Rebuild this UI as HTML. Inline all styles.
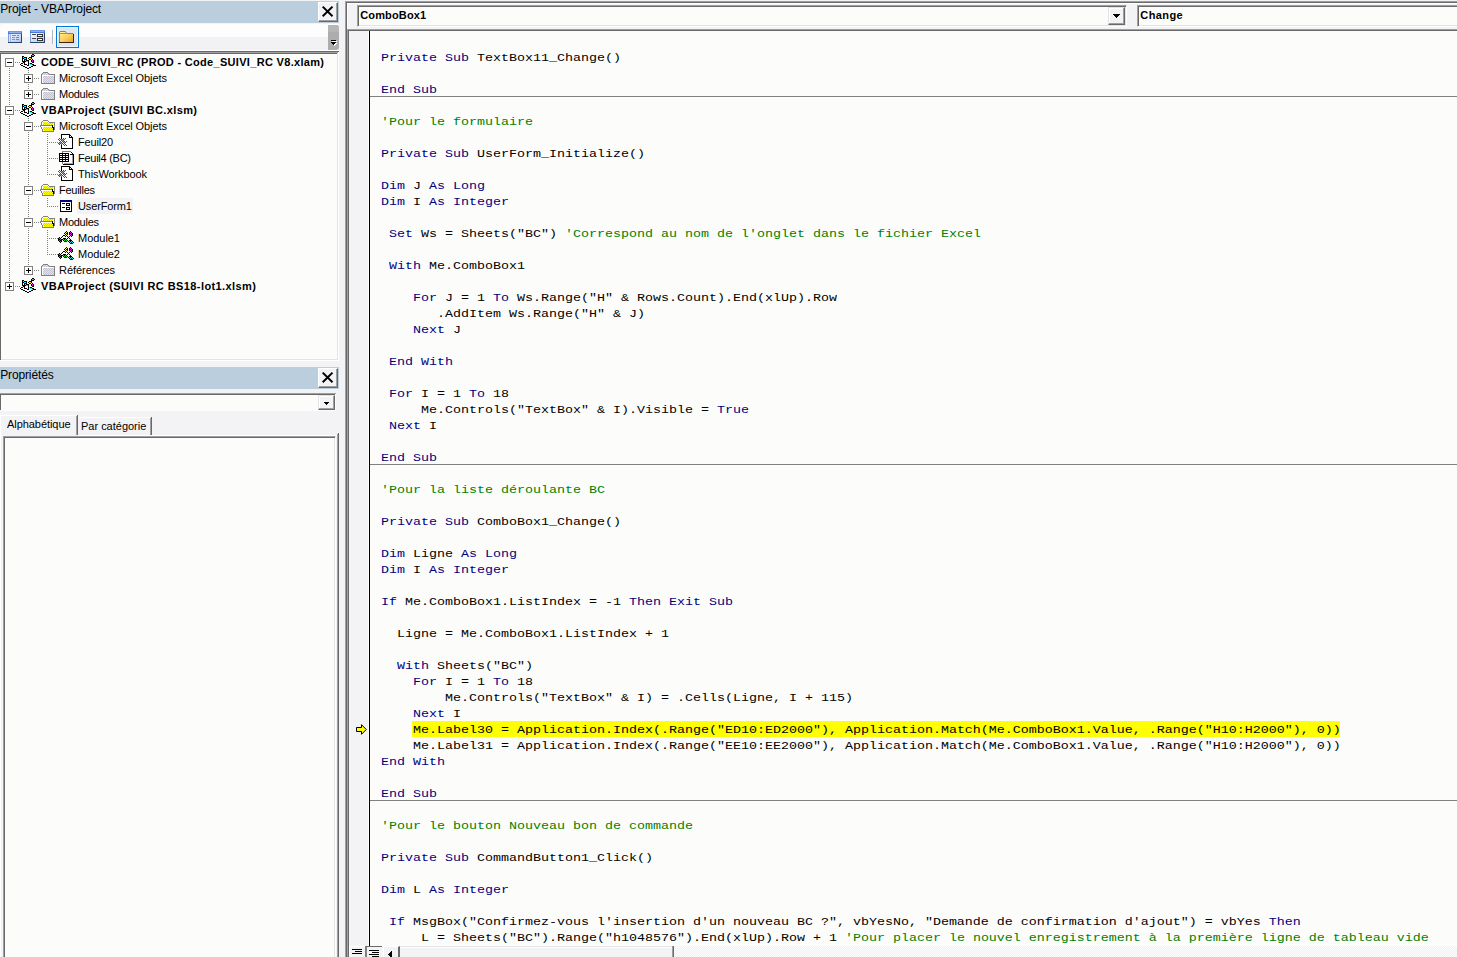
<!DOCTYPE html>
<html><head><meta charset="utf-8"><title>VBA</title>
<style>
*{box-sizing:border-box;margin:0;padding:0}
html,body{width:1457px;height:957px;overflow:hidden;background:#f3f2f5;font-family:"Liberation Sans",sans-serif;}
.abs{position:absolute}
#root{position:absolute;left:0;top:0;width:1457px;height:957px;overflow:hidden;background:#f3f2f5}
.tbar{position:absolute;left:0;width:339px;height:22px;background:#bbcedd;font-size:12px;color:#000;white-space:nowrap}
.tbar span{position:absolute;left:0.2px;top:1px;line-height:14px}
.tbar span span{position:static}
.xbtn{position:absolute;left:318px;width:20px;height:20px;background:#f3f2f5;border-top:1px solid #fff;border-left:1px solid #fff;border-right:1px solid #696969;border-bottom:1px solid #696969;box-shadow:inset -1px -1px 0 #a0a0a0}
.xbtn svg{position:absolute;left:2px;top:2px}
#tree{position:absolute;left:0;top:51px;width:339px;height:310px;background:#fcfdfb;overflow:hidden}
.trow{position:absolute;height:16px;font-size:11px;line-height:16px;white-space:nowrap;color:#000}
.b{font-weight:bold}
.fit{display:inline-block;white-space:nowrap}
#code{position:absolute;left:370px;top:31px;width:1087px;height:915px;background:#fcfdfb;overflow:hidden}
.ln{position:absolute;height:16px;transform:scaleY(0.87);transform-origin:0 0;font-family:"Liberation Mono",monospace;font-size:13.333px;line-height:16px;white-space:pre;color:#000}
.k{color:#000080}.c{color:#008000}
.sep{position:absolute;left:0;width:1087px;height:1px;background:#808080}
.l{position:absolute}
.cbtn{position:absolute;background:#f3f2f5;border-top:1px solid #e3e3e3;border-left:1px solid #e3e3e3;border-right:1px solid #696969;border-bottom:1px solid #696969;box-shadow:inset -1px -1px 0 #a0a0a0,inset 1px 1px 0 #fff}
.cmb{position:absolute;background:#fcfdfb;border-top:1px solid #a0a0a0;border-left:1px solid #a0a0a0;border-right:1px solid #fff;border-bottom:1px solid #fff;box-shadow:inset 1px 1px 0 #696969,inset -1px -1px 0 #e3e3e3;font-size:11px;font-weight:bold;white-space:nowrap}
</style></head><body><div id="root">

<!-- ===== PROJECT PANEL ===== -->
<div class="tbar" style="top:1px"><span id="t1"><span class="fit" style="letter-spacing:-0.132px">Projet - VBAProject</span></span></div>
<div class="xbtn" style="top:2px"><svg width="16" height="16" viewBox="0 0 16 16"><path d="M1.7 1.6 L11.5 11.3 M11.5 1.6 L1.7 11.3" stroke="#000" stroke-width="2" fill="none"/></svg></div>
<!-- toolbar -->
<div class="abs" style="left:0;top:24px;width:339px;height:13px;background:#fdfdfd;border-top-left-radius:3px"></div>
<div class="abs" style="left:0;top:37px;width:339px;height:13px;background:#f2f1f4"></div>
<div class="abs" style="left:0;top:50px;width:339px;height:1px;background:#fff"></div>

<!-- view code icon 8..21 x 31..42 -->
<svg class="abs" style="left:8px;top:31px" width="14" height="12" shape-rendering="crispEdges">
<defs><linearGradient id="gb1" x1="0" y1="0" x2="1" y2="1"><stop offset="0" stop-color="#fff"/><stop offset="1" stop-color="#a9c4f0"/></linearGradient></defs>
<rect x="0" y="0" width="14" height="12" fill="#4a78dc"/>
<rect x="0" y="0" width="14" height="1" fill="#6f96ea"/>
<rect x="1" y="1" width="12" height="1" fill="#8fb0f0"/>
<rect x="0" y="3" width="13" height="8" fill="url(#gb1)"/>
<rect x="0" y="3" width="1" height="8" fill="#7fa0e0"/><rect x="1" y="3" width="1" height="8" fill="#e8e4c0"/><rect x="2" y="3" width="1" height="8" fill="#9fb6e6"/>
<rect x="13" y="3" width="1" height="9" fill="#2a4470"/><rect x="0" y="11" width="14" height="1" fill="#2a4470"/>
<rect x="4" y="4" width="4" height="1" fill="#ff5a2a"/><rect x="9" y="4" width="2" height="1" fill="#ff5a2a"/>
<rect x="4" y="6" width="3" height="1" fill="#7f92b8"/><rect x="8" y="6" width="3" height="1" fill="#6f84ae"/>
<rect x="4" y="8" width="3" height="1" fill="#7f92b8"/><rect x="8" y="8" width="3" height="1" fill="#ff5a2a"/>
</svg>
<!-- view object icon 30..44 x 30..42 -->
<svg class="abs" style="left:30px;top:30px" width="15" height="13" shape-rendering="crispEdges">
<defs><linearGradient id="gb2" x1="0" y1="0" x2="1" y2="1"><stop offset="0" stop-color="#fff"/><stop offset="1" stop-color="#a9c4f0"/></linearGradient></defs>
<rect x="0" y="0" width="15" height="13" fill="#4a78dc"/>
<rect x="0" y="0" width="15" height="1" fill="#6f96ea"/>
<rect x="1" y="1" width="13" height="1" fill="#8fb0f0"/>
<rect x="0" y="3" width="14" height="9" fill="url(#gb2)"/>
<rect x="0" y="3" width="1" height="9" fill="#7fa0e0"/>
<rect x="14" y="3" width="1" height="10" fill="#2a4470"/><rect x="0" y="12" width="15" height="1" fill="#2a4470"/>
<rect x="2" y="4" width="4" height="1" fill="#444"/><rect x="2" y="8" width="4" height="1" fill="#444"/>
<rect x="7" y="4" width="6" height="3" fill="#333"/><rect x="8" y="5" width="4" height="1" fill="#fff"/>
<rect x="7" y="8" width="6" height="3" fill="#333"/><rect x="8" y="9" width="4" height="1" fill="#fff"/>
</svg>
<!-- separator -->
<div class="l" style="left:52px;top:30px;width:1px;height:14px;background:#b4b4b4"></div>
<div class="l" style="left:53px;top:30px;width:1px;height:14px;background:#fff"></div>
<!-- toggle folders button 56..78 x 26..47 -->
<div class="abs" style="left:56px;top:26px;width:23px;height:22px;background:#dbe8f4;border:1px solid #0078d7;box-shadow:inset 0 0 0 1px #f0f6fc"></div>
<svg class="abs" style="left:59px;top:31px" width="15" height="12">
<defs><linearGradient id="gf" x1="0" y1="0" x2="1" y2="1"><stop offset="0" stop-color="#fff0a0"/><stop offset="0.5" stop-color="#fcd060"/><stop offset="1" stop-color="#eaa020"/></linearGradient></defs>
<path d="M0.5 11.5 V1 L1 0.5 H6.5 L7.5 2.5 H14 L14.5 3 V11.5 Z" fill="url(#gf)" stroke="#8a8070" stroke-width="1"/>
<rect x="1" y="1" width="5" height="1" fill="#fff0a0"/>
<rect x="1" y="2" width="6" height="1" fill="#9a9080"/>
<path d="M0 11.5 H15 M14.5 3 V12" stroke="#3a2418" stroke-width="1" fill="none"/>
</svg>

<!-- overflow -->
<div class="abs" style="left:328px;top:25px;width:11px;height:25px;background:#adadad;border-radius:0 3px 3px 0"></div>
<div class="abs" style="left:328px;top:25px;width:11px;height:7px;background:#b6b6b6;border-radius:0 3px 0 0"></div>
<svg class="abs" style="left:330px;top:39px" width="8" height="8" shape-rendering="crispEdges"><g fill="#fff" transform="translate(1,1)"><rect x="1" y="1" width="5" height="1"/><rect x="1" y="3" width="5" height="1"/><rect x="2" y="4" width="3" height="1"/><rect x="3" y="5" width="1" height="1"/></g><g fill="#000"><rect x="1" y="1" width="5" height="1"/><rect x="1" y="3" width="5" height="1"/><rect x="2" y="4" width="3" height="1"/><rect x="3" y="5" width="1" height="1"/></g></svg>
<!-- tree -->
<div id="tree">
<div class="abs" style="left:5px;top:7px;width:9px;height:9px;border:1px solid #808080;background:#fff"></div><div class="abs" style="left:7px;top:11px;width:5px;height:1px;background:#000"></div>
<svg class="abs" style="left:20px;top:3px" width="16" height="16" shape-rendering="crispEdges"><rect x="12" y="0" width="2" height="1" fill="#000"/><rect x="11" y="1" width="1" height="1" fill="#000"/><rect x="12" y="1" width="2" height="1" fill="#00ff00"/><rect x="14" y="1" width="1" height="1" fill="#000"/><rect x="2" y="2" width="2" height="1" fill="#000"/><rect x="11" y="2" width="3" height="1" fill="#000"/><rect x="2" y="3" width="1" height="1" fill="#000"/><rect x="3" y="3" width="1" height="1" fill="#00ffff"/><rect x="4" y="3" width="3" height="1" fill="#000"/><rect x="9" y="3" width="3" height="1" fill="#000"/><rect x="2" y="4" width="2" height="1" fill="#000"/><rect x="4" y="4" width="2" height="1" fill="#00ffff"/><rect x="6" y="4" width="1" height="1" fill="#000"/><rect x="8" y="4" width="1" height="1" fill="#000"/><rect x="9" y="4" width="2" height="1" fill="#ffff00"/><rect x="11" y="4" width="1" height="1" fill="#000"/><rect x="2" y="5" width="1" height="1" fill="#000"/><rect x="3" y="5" width="1" height="1" fill="#fff"/><rect x="4" y="5" width="3" height="1" fill="#000"/><rect x="9" y="5" width="2" height="1" fill="#000"/><rect x="12" y="5" width="1" height="1" fill="#000"/><rect x="2" y="6" width="1" height="1" fill="#000"/><rect x="3" y="6" width="1" height="1" fill="#fff"/><rect x="4" y="6" width="1" height="1" fill="#000"/><rect x="5" y="6" width="1" height="1" fill="#00ffff"/><rect x="6" y="6" width="3" height="1" fill="#000"/><rect x="11" y="6" width="1" height="1" fill="#000"/><rect x="12" y="6" width="1" height="1" fill="#ff00ff"/><rect x="13" y="6" width="1" height="1" fill="#000"/><rect x="2" y="7" width="4" height="1" fill="#000"/><rect x="6" y="7" width="2" height="1" fill="#00ffff"/><rect x="8" y="7" width="1" height="1" fill="#000"/><rect x="11" y="7" width="1" height="1" fill="#000"/><rect x="12" y="7" width="1" height="1" fill="#ff00ff"/><rect x="13" y="7" width="1" height="1" fill="#000"/><rect x="3" y="8" width="2" height="1" fill="#000"/><rect x="5" y="8" width="3" height="1" fill="#fff"/><rect x="8" y="8" width="1" height="1" fill="#000"/><rect x="12" y="8" width="2" height="1" fill="#000"/><rect x="1" y="9" width="2" height="1" fill="#000"/><rect x="4" y="9" width="1" height="1" fill="#000"/><rect x="5" y="9" width="3" height="1" fill="#fff"/><rect x="8" y="9" width="1" height="1" fill="#000"/><rect x="9" y="9" width="1" height="1" fill="#00ffff"/><rect x="10" y="9" width="2" height="1" fill="#000"/><rect x="0" y="10" width="1" height="1" fill="#000"/><rect x="4" y="10" width="3" height="1" fill="#000"/><rect x="7" y="10" width="1" height="1" fill="#fff"/><rect x="8" y="10" width="1" height="1" fill="#000"/><rect x="10" y="10" width="2" height="1" fill="#00ffff"/><rect x="12" y="10" width="2" height="1" fill="#000"/><rect x="1" y="11" width="2" height="1" fill="#000"/><rect x="7" y="11" width="2" height="1" fill="#000"/><rect x="12" y="11" width="1" height="1" fill="#00ffff"/><rect x="13" y="11" width="3" height="1" fill="#000"/><rect x="3" y="12" width="2" height="1" fill="#000"/><rect x="11" y="12" width="2" height="1" fill="#000"/><rect x="5" y="13" width="2" height="1" fill="#000"/><rect x="9" y="13" width="2" height="1" fill="#000"/><rect x="7" y="14" width="2" height="1" fill="#000"/></svg>
<div class="trow b" style="left:41px;top:3px"><span class="fit" style="letter-spacing:0.312px">CODE_SUIVI_RC (PROD - Code_SUIVI_RC V8.xlam)</span></div>
<div class="abs" style="left:24px;top:23px;width:9px;height:9px;border:1px solid #808080;background:#fff"></div><div class="abs" style="left:26px;top:27px;width:5px;height:1px;background:#000"></div><div class="abs" style="left:28px;top:25px;width:1px;height:5px;background:#000"></div>
<svg class="abs" style="left:41px;top:21px" width="14" height="12" shape-rendering="crispEdges"><rect x="2" y="0" width="5" height="1" fill="#808080"/><rect x="1" y="1" width="1" height="1" fill="#808080"/><rect x="2" y="1" width="1" height="1" fill="#c4c4d0"/><rect x="3" y="1" width="1" height="1" fill="#ffff00"/><rect x="4" y="1" width="1" height="1" fill="#c4c4d0"/><rect x="5" y="1" width="1" height="1" fill="#ffff00"/><rect x="6" y="1" width="1" height="1" fill="#c4c4d0"/><rect x="7" y="1" width="1" height="1" fill="#808080"/><rect x="0" y="2" width="1" height="1" fill="#808080"/><rect x="1" y="2" width="1" height="1" fill="#c4c4d0"/><rect x="2" y="2" width="1" height="1" fill="#ffff00"/><rect x="3" y="2" width="1" height="1" fill="#c4c4d0"/><rect x="4" y="2" width="1" height="1" fill="#ffff00"/><rect x="5" y="2" width="1" height="1" fill="#c4c4d0"/><rect x="6" y="2" width="1" height="1" fill="#ffff00"/><rect x="7" y="2" width="1" height="1" fill="#c4c4d0"/><rect x="8" y="2" width="6" height="1" fill="#808080"/><rect x="0" y="3" width="1" height="1" fill="#808080"/><rect x="1" y="3" width="12" height="1" fill="#fff"/><rect x="13" y="3" width="1" height="1" fill="#808080"/><rect x="0" y="4" width="1" height="1" fill="#808080"/><rect x="1" y="4" width="1" height="1" fill="#fff"/><rect x="2" y="4" width="1" height="1" fill="#ffff00"/><rect x="3" y="4" width="1" height="1" fill="#c4c4d0"/><rect x="4" y="4" width="1" height="1" fill="#ffff00"/><rect x="5" y="4" width="1" height="1" fill="#c4c4d0"/><rect x="6" y="4" width="1" height="1" fill="#ffff00"/><rect x="7" y="4" width="1" height="1" fill="#c4c4d0"/><rect x="8" y="4" width="1" height="1" fill="#ffff00"/><rect x="9" y="4" width="1" height="1" fill="#c4c4d0"/><rect x="10" y="4" width="1" height="1" fill="#ffff00"/><rect x="11" y="4" width="1" height="1" fill="#c4c4d0"/><rect x="12" y="4" width="1" height="1" fill="#ffff00"/><rect x="13" y="4" width="1" height="1" fill="#808080"/><rect x="0" y="5" width="1" height="1" fill="#808080"/><rect x="1" y="5" width="1" height="1" fill="#fff"/><rect x="2" y="5" width="1" height="1" fill="#c4c4d0"/><rect x="3" y="5" width="1" height="1" fill="#ffff00"/><rect x="4" y="5" width="1" height="1" fill="#c4c4d0"/><rect x="5" y="5" width="1" height="1" fill="#ffff00"/><rect x="6" y="5" width="1" height="1" fill="#c4c4d0"/><rect x="7" y="5" width="1" height="1" fill="#ffff00"/><rect x="8" y="5" width="1" height="1" fill="#c4c4d0"/><rect x="9" y="5" width="1" height="1" fill="#ffff00"/><rect x="10" y="5" width="1" height="1" fill="#c4c4d0"/><rect x="11" y="5" width="1" height="1" fill="#ffff00"/><rect x="12" y="5" width="1" height="1" fill="#c4c4d0"/><rect x="13" y="5" width="1" height="1" fill="#808080"/><rect x="0" y="6" width="1" height="1" fill="#808080"/><rect x="1" y="6" width="1" height="1" fill="#fff"/><rect x="2" y="6" width="1" height="1" fill="#ffff00"/><rect x="3" y="6" width="1" height="1" fill="#c4c4d0"/><rect x="4" y="6" width="1" height="1" fill="#ffff00"/><rect x="5" y="6" width="1" height="1" fill="#c4c4d0"/><rect x="6" y="6" width="1" height="1" fill="#ffff00"/><rect x="7" y="6" width="1" height="1" fill="#c4c4d0"/><rect x="8" y="6" width="1" height="1" fill="#ffff00"/><rect x="9" y="6" width="1" height="1" fill="#c4c4d0"/><rect x="10" y="6" width="1" height="1" fill="#ffff00"/><rect x="11" y="6" width="1" height="1" fill="#c4c4d0"/><rect x="12" y="6" width="1" height="1" fill="#ffff00"/><rect x="13" y="6" width="1" height="1" fill="#808080"/><rect x="0" y="7" width="1" height="1" fill="#808080"/><rect x="1" y="7" width="1" height="1" fill="#fff"/><rect x="2" y="7" width="1" height="1" fill="#c4c4d0"/><rect x="3" y="7" width="1" height="1" fill="#ffff00"/><rect x="4" y="7" width="1" height="1" fill="#c4c4d0"/><rect x="5" y="7" width="1" height="1" fill="#ffff00"/><rect x="6" y="7" width="1" height="1" fill="#c4c4d0"/><rect x="7" y="7" width="1" height="1" fill="#ffff00"/><rect x="8" y="7" width="1" height="1" fill="#c4c4d0"/><rect x="9" y="7" width="1" height="1" fill="#ffff00"/><rect x="10" y="7" width="1" height="1" fill="#c4c4d0"/><rect x="11" y="7" width="1" height="1" fill="#ffff00"/><rect x="12" y="7" width="1" height="1" fill="#c4c4d0"/><rect x="13" y="7" width="1" height="1" fill="#808080"/><rect x="0" y="8" width="1" height="1" fill="#808080"/><rect x="1" y="8" width="1" height="1" fill="#fff"/><rect x="2" y="8" width="1" height="1" fill="#ffff00"/><rect x="3" y="8" width="1" height="1" fill="#c4c4d0"/><rect x="4" y="8" width="1" height="1" fill="#ffff00"/><rect x="5" y="8" width="1" height="1" fill="#c4c4d0"/><rect x="6" y="8" width="1" height="1" fill="#ffff00"/><rect x="7" y="8" width="1" height="1" fill="#c4c4d0"/><rect x="8" y="8" width="1" height="1" fill="#ffff00"/><rect x="9" y="8" width="1" height="1" fill="#c4c4d0"/><rect x="10" y="8" width="1" height="1" fill="#ffff00"/><rect x="11" y="8" width="1" height="1" fill="#c4c4d0"/><rect x="12" y="8" width="1" height="1" fill="#ffff00"/><rect x="13" y="8" width="1" height="1" fill="#808080"/><rect x="0" y="9" width="1" height="1" fill="#808080"/><rect x="1" y="9" width="1" height="1" fill="#fff"/><rect x="2" y="9" width="1" height="1" fill="#c4c4d0"/><rect x="3" y="9" width="1" height="1" fill="#ffff00"/><rect x="4" y="9" width="1" height="1" fill="#c4c4d0"/><rect x="5" y="9" width="1" height="1" fill="#ffff00"/><rect x="6" y="9" width="1" height="1" fill="#c4c4d0"/><rect x="7" y="9" width="1" height="1" fill="#ffff00"/><rect x="8" y="9" width="1" height="1" fill="#c4c4d0"/><rect x="9" y="9" width="1" height="1" fill="#ffff00"/><rect x="10" y="9" width="1" height="1" fill="#c4c4d0"/><rect x="11" y="9" width="1" height="1" fill="#ffff00"/><rect x="12" y="9" width="1" height="1" fill="#c4c4d0"/><rect x="13" y="9" width="1" height="1" fill="#808080"/><rect x="0" y="10" width="1" height="1" fill="#808080"/><rect x="1" y="10" width="1" height="1" fill="#fff"/><rect x="2" y="10" width="1" height="1" fill="#ffff00"/><rect x="3" y="10" width="1" height="1" fill="#c4c4d0"/><rect x="4" y="10" width="1" height="1" fill="#ffff00"/><rect x="5" y="10" width="1" height="1" fill="#c4c4d0"/><rect x="6" y="10" width="1" height="1" fill="#ffff00"/><rect x="7" y="10" width="1" height="1" fill="#c4c4d0"/><rect x="8" y="10" width="1" height="1" fill="#ffff00"/><rect x="9" y="10" width="1" height="1" fill="#c4c4d0"/><rect x="10" y="10" width="1" height="1" fill="#ffff00"/><rect x="11" y="10" width="1" height="1" fill="#c4c4d0"/><rect x="12" y="10" width="1" height="1" fill="#ffff00"/><rect x="13" y="10" width="1" height="1" fill="#808080"/><rect x="0" y="11" width="14" height="1" fill="#808080"/></svg>
<div class="trow" style="left:59px;top:19px"><span class="fit" style="letter-spacing:-0.068px">Microsoft Excel Objets</span></div>
<div class="abs" style="left:24px;top:39px;width:9px;height:9px;border:1px solid #808080;background:#fff"></div><div class="abs" style="left:26px;top:43px;width:5px;height:1px;background:#000"></div><div class="abs" style="left:28px;top:41px;width:1px;height:5px;background:#000"></div>
<svg class="abs" style="left:41px;top:37px" width="14" height="12" shape-rendering="crispEdges"><rect x="2" y="0" width="5" height="1" fill="#808080"/><rect x="1" y="1" width="1" height="1" fill="#808080"/><rect x="2" y="1" width="1" height="1" fill="#c4c4d0"/><rect x="3" y="1" width="1" height="1" fill="#ffff00"/><rect x="4" y="1" width="1" height="1" fill="#c4c4d0"/><rect x="5" y="1" width="1" height="1" fill="#ffff00"/><rect x="6" y="1" width="1" height="1" fill="#c4c4d0"/><rect x="7" y="1" width="1" height="1" fill="#808080"/><rect x="0" y="2" width="1" height="1" fill="#808080"/><rect x="1" y="2" width="1" height="1" fill="#c4c4d0"/><rect x="2" y="2" width="1" height="1" fill="#ffff00"/><rect x="3" y="2" width="1" height="1" fill="#c4c4d0"/><rect x="4" y="2" width="1" height="1" fill="#ffff00"/><rect x="5" y="2" width="1" height="1" fill="#c4c4d0"/><rect x="6" y="2" width="1" height="1" fill="#ffff00"/><rect x="7" y="2" width="1" height="1" fill="#c4c4d0"/><rect x="8" y="2" width="6" height="1" fill="#808080"/><rect x="0" y="3" width="1" height="1" fill="#808080"/><rect x="1" y="3" width="12" height="1" fill="#fff"/><rect x="13" y="3" width="1" height="1" fill="#808080"/><rect x="0" y="4" width="1" height="1" fill="#808080"/><rect x="1" y="4" width="1" height="1" fill="#fff"/><rect x="2" y="4" width="1" height="1" fill="#ffff00"/><rect x="3" y="4" width="1" height="1" fill="#c4c4d0"/><rect x="4" y="4" width="1" height="1" fill="#ffff00"/><rect x="5" y="4" width="1" height="1" fill="#c4c4d0"/><rect x="6" y="4" width="1" height="1" fill="#ffff00"/><rect x="7" y="4" width="1" height="1" fill="#c4c4d0"/><rect x="8" y="4" width="1" height="1" fill="#ffff00"/><rect x="9" y="4" width="1" height="1" fill="#c4c4d0"/><rect x="10" y="4" width="1" height="1" fill="#ffff00"/><rect x="11" y="4" width="1" height="1" fill="#c4c4d0"/><rect x="12" y="4" width="1" height="1" fill="#ffff00"/><rect x="13" y="4" width="1" height="1" fill="#808080"/><rect x="0" y="5" width="1" height="1" fill="#808080"/><rect x="1" y="5" width="1" height="1" fill="#fff"/><rect x="2" y="5" width="1" height="1" fill="#c4c4d0"/><rect x="3" y="5" width="1" height="1" fill="#ffff00"/><rect x="4" y="5" width="1" height="1" fill="#c4c4d0"/><rect x="5" y="5" width="1" height="1" fill="#ffff00"/><rect x="6" y="5" width="1" height="1" fill="#c4c4d0"/><rect x="7" y="5" width="1" height="1" fill="#ffff00"/><rect x="8" y="5" width="1" height="1" fill="#c4c4d0"/><rect x="9" y="5" width="1" height="1" fill="#ffff00"/><rect x="10" y="5" width="1" height="1" fill="#c4c4d0"/><rect x="11" y="5" width="1" height="1" fill="#ffff00"/><rect x="12" y="5" width="1" height="1" fill="#c4c4d0"/><rect x="13" y="5" width="1" height="1" fill="#808080"/><rect x="0" y="6" width="1" height="1" fill="#808080"/><rect x="1" y="6" width="1" height="1" fill="#fff"/><rect x="2" y="6" width="1" height="1" fill="#ffff00"/><rect x="3" y="6" width="1" height="1" fill="#c4c4d0"/><rect x="4" y="6" width="1" height="1" fill="#ffff00"/><rect x="5" y="6" width="1" height="1" fill="#c4c4d0"/><rect x="6" y="6" width="1" height="1" fill="#ffff00"/><rect x="7" y="6" width="1" height="1" fill="#c4c4d0"/><rect x="8" y="6" width="1" height="1" fill="#ffff00"/><rect x="9" y="6" width="1" height="1" fill="#c4c4d0"/><rect x="10" y="6" width="1" height="1" fill="#ffff00"/><rect x="11" y="6" width="1" height="1" fill="#c4c4d0"/><rect x="12" y="6" width="1" height="1" fill="#ffff00"/><rect x="13" y="6" width="1" height="1" fill="#808080"/><rect x="0" y="7" width="1" height="1" fill="#808080"/><rect x="1" y="7" width="1" height="1" fill="#fff"/><rect x="2" y="7" width="1" height="1" fill="#c4c4d0"/><rect x="3" y="7" width="1" height="1" fill="#ffff00"/><rect x="4" y="7" width="1" height="1" fill="#c4c4d0"/><rect x="5" y="7" width="1" height="1" fill="#ffff00"/><rect x="6" y="7" width="1" height="1" fill="#c4c4d0"/><rect x="7" y="7" width="1" height="1" fill="#ffff00"/><rect x="8" y="7" width="1" height="1" fill="#c4c4d0"/><rect x="9" y="7" width="1" height="1" fill="#ffff00"/><rect x="10" y="7" width="1" height="1" fill="#c4c4d0"/><rect x="11" y="7" width="1" height="1" fill="#ffff00"/><rect x="12" y="7" width="1" height="1" fill="#c4c4d0"/><rect x="13" y="7" width="1" height="1" fill="#808080"/><rect x="0" y="8" width="1" height="1" fill="#808080"/><rect x="1" y="8" width="1" height="1" fill="#fff"/><rect x="2" y="8" width="1" height="1" fill="#ffff00"/><rect x="3" y="8" width="1" height="1" fill="#c4c4d0"/><rect x="4" y="8" width="1" height="1" fill="#ffff00"/><rect x="5" y="8" width="1" height="1" fill="#c4c4d0"/><rect x="6" y="8" width="1" height="1" fill="#ffff00"/><rect x="7" y="8" width="1" height="1" fill="#c4c4d0"/><rect x="8" y="8" width="1" height="1" fill="#ffff00"/><rect x="9" y="8" width="1" height="1" fill="#c4c4d0"/><rect x="10" y="8" width="1" height="1" fill="#ffff00"/><rect x="11" y="8" width="1" height="1" fill="#c4c4d0"/><rect x="12" y="8" width="1" height="1" fill="#ffff00"/><rect x="13" y="8" width="1" height="1" fill="#808080"/><rect x="0" y="9" width="1" height="1" fill="#808080"/><rect x="1" y="9" width="1" height="1" fill="#fff"/><rect x="2" y="9" width="1" height="1" fill="#c4c4d0"/><rect x="3" y="9" width="1" height="1" fill="#ffff00"/><rect x="4" y="9" width="1" height="1" fill="#c4c4d0"/><rect x="5" y="9" width="1" height="1" fill="#ffff00"/><rect x="6" y="9" width="1" height="1" fill="#c4c4d0"/><rect x="7" y="9" width="1" height="1" fill="#ffff00"/><rect x="8" y="9" width="1" height="1" fill="#c4c4d0"/><rect x="9" y="9" width="1" height="1" fill="#ffff00"/><rect x="10" y="9" width="1" height="1" fill="#c4c4d0"/><rect x="11" y="9" width="1" height="1" fill="#ffff00"/><rect x="12" y="9" width="1" height="1" fill="#c4c4d0"/><rect x="13" y="9" width="1" height="1" fill="#808080"/><rect x="0" y="10" width="1" height="1" fill="#808080"/><rect x="1" y="10" width="1" height="1" fill="#fff"/><rect x="2" y="10" width="1" height="1" fill="#ffff00"/><rect x="3" y="10" width="1" height="1" fill="#c4c4d0"/><rect x="4" y="10" width="1" height="1" fill="#ffff00"/><rect x="5" y="10" width="1" height="1" fill="#c4c4d0"/><rect x="6" y="10" width="1" height="1" fill="#ffff00"/><rect x="7" y="10" width="1" height="1" fill="#c4c4d0"/><rect x="8" y="10" width="1" height="1" fill="#ffff00"/><rect x="9" y="10" width="1" height="1" fill="#c4c4d0"/><rect x="10" y="10" width="1" height="1" fill="#ffff00"/><rect x="11" y="10" width="1" height="1" fill="#c4c4d0"/><rect x="12" y="10" width="1" height="1" fill="#ffff00"/><rect x="13" y="10" width="1" height="1" fill="#808080"/><rect x="0" y="11" width="14" height="1" fill="#808080"/></svg>
<div class="trow" style="left:59px;top:35px"><span class="fit" style="letter-spacing:-0.263px">Modules</span></div>
<div class="abs" style="left:5px;top:55px;width:9px;height:9px;border:1px solid #808080;background:#fff"></div><div class="abs" style="left:7px;top:59px;width:5px;height:1px;background:#000"></div>
<svg class="abs" style="left:20px;top:51px" width="16" height="16" shape-rendering="crispEdges"><rect x="12" y="0" width="2" height="1" fill="#000"/><rect x="11" y="1" width="1" height="1" fill="#000"/><rect x="12" y="1" width="2" height="1" fill="#00ff00"/><rect x="14" y="1" width="1" height="1" fill="#000"/><rect x="2" y="2" width="2" height="1" fill="#000"/><rect x="11" y="2" width="3" height="1" fill="#000"/><rect x="2" y="3" width="1" height="1" fill="#000"/><rect x="3" y="3" width="1" height="1" fill="#00ffff"/><rect x="4" y="3" width="3" height="1" fill="#000"/><rect x="9" y="3" width="3" height="1" fill="#000"/><rect x="2" y="4" width="2" height="1" fill="#000"/><rect x="4" y="4" width="2" height="1" fill="#00ffff"/><rect x="6" y="4" width="1" height="1" fill="#000"/><rect x="8" y="4" width="1" height="1" fill="#000"/><rect x="9" y="4" width="2" height="1" fill="#ffff00"/><rect x="11" y="4" width="1" height="1" fill="#000"/><rect x="2" y="5" width="1" height="1" fill="#000"/><rect x="3" y="5" width="1" height="1" fill="#fff"/><rect x="4" y="5" width="3" height="1" fill="#000"/><rect x="9" y="5" width="2" height="1" fill="#000"/><rect x="12" y="5" width="1" height="1" fill="#000"/><rect x="2" y="6" width="1" height="1" fill="#000"/><rect x="3" y="6" width="1" height="1" fill="#fff"/><rect x="4" y="6" width="1" height="1" fill="#000"/><rect x="5" y="6" width="1" height="1" fill="#00ffff"/><rect x="6" y="6" width="3" height="1" fill="#000"/><rect x="11" y="6" width="1" height="1" fill="#000"/><rect x="12" y="6" width="1" height="1" fill="#ff00ff"/><rect x="13" y="6" width="1" height="1" fill="#000"/><rect x="2" y="7" width="4" height="1" fill="#000"/><rect x="6" y="7" width="2" height="1" fill="#00ffff"/><rect x="8" y="7" width="1" height="1" fill="#000"/><rect x="11" y="7" width="1" height="1" fill="#000"/><rect x="12" y="7" width="1" height="1" fill="#ff00ff"/><rect x="13" y="7" width="1" height="1" fill="#000"/><rect x="3" y="8" width="2" height="1" fill="#000"/><rect x="5" y="8" width="3" height="1" fill="#fff"/><rect x="8" y="8" width="1" height="1" fill="#000"/><rect x="12" y="8" width="2" height="1" fill="#000"/><rect x="1" y="9" width="2" height="1" fill="#000"/><rect x="4" y="9" width="1" height="1" fill="#000"/><rect x="5" y="9" width="3" height="1" fill="#fff"/><rect x="8" y="9" width="1" height="1" fill="#000"/><rect x="9" y="9" width="1" height="1" fill="#00ffff"/><rect x="10" y="9" width="2" height="1" fill="#000"/><rect x="0" y="10" width="1" height="1" fill="#000"/><rect x="4" y="10" width="3" height="1" fill="#000"/><rect x="7" y="10" width="1" height="1" fill="#fff"/><rect x="8" y="10" width="1" height="1" fill="#000"/><rect x="10" y="10" width="2" height="1" fill="#00ffff"/><rect x="12" y="10" width="2" height="1" fill="#000"/><rect x="1" y="11" width="2" height="1" fill="#000"/><rect x="7" y="11" width="2" height="1" fill="#000"/><rect x="12" y="11" width="1" height="1" fill="#00ffff"/><rect x="13" y="11" width="3" height="1" fill="#000"/><rect x="3" y="12" width="2" height="1" fill="#000"/><rect x="11" y="12" width="2" height="1" fill="#000"/><rect x="5" y="13" width="2" height="1" fill="#000"/><rect x="9" y="13" width="2" height="1" fill="#000"/><rect x="7" y="14" width="2" height="1" fill="#000"/></svg>
<div class="trow b" style="left:41px;top:51px"><span class="fit" style="letter-spacing:0.372px">VBAProject (SUIVI BC.xlsm)</span></div>
<div class="abs" style="left:24px;top:71px;width:9px;height:9px;border:1px solid #808080;background:#fff"></div><div class="abs" style="left:26px;top:75px;width:5px;height:1px;background:#000"></div>
<svg class="abs" style="left:40px;top:69px" width="15" height="12" shape-rendering="crispEdges"><rect x="3" y="0" width="5" height="1" fill="#808080"/><rect x="2" y="1" width="1" height="1" fill="#808080"/><rect x="8" y="1" width="1" height="1" fill="#808080"/><rect x="1" y="2" width="1" height="1" fill="#808080"/><rect x="3" y="2" width="1" height="1" fill="#c4c4d0"/><rect x="4" y="2" width="1" height="1" fill="#ffff00"/><rect x="5" y="2" width="1" height="1" fill="#c4c4d0"/><rect x="6" y="2" width="1" height="1" fill="#ffff00"/><rect x="7" y="2" width="1" height="1" fill="#c4c4d0"/><rect x="9" y="2" width="6" height="1" fill="#808080"/><rect x="1" y="3" width="1" height="1" fill="#808080"/><rect x="2" y="3" width="1" height="1" fill="#fff"/><rect x="3" y="3" width="1" height="1" fill="#ffff00"/><rect x="4" y="3" width="1" height="1" fill="#c4c4d0"/><rect x="5" y="3" width="1" height="1" fill="#ffff00"/><rect x="6" y="3" width="1" height="1" fill="#c4c4d0"/><rect x="7" y="3" width="1" height="1" fill="#ffff00"/><rect x="8" y="3" width="1" height="1" fill="#c4c4d0"/><rect x="9" y="3" width="1" height="1" fill="#ffff00"/><rect x="10" y="3" width="1" height="1" fill="#c4c4d0"/><rect x="11" y="3" width="1" height="1" fill="#ffff00"/><rect x="12" y="3" width="1" height="1" fill="#c4c4d0"/><rect x="13" y="3" width="1" height="1" fill="#fff"/><rect x="14" y="3" width="1" height="1" fill="#808080"/><rect x="1" y="4" width="1" height="1" fill="#808080"/><rect x="2" y="4" width="1" height="1" fill="#fff"/><rect x="3" y="4" width="1" height="1" fill="#c4c4d0"/><rect x="4" y="4" width="1" height="1" fill="#ffff00"/><rect x="5" y="4" width="1" height="1" fill="#c4c4d0"/><rect x="6" y="4" width="1" height="1" fill="#ffff00"/><rect x="7" y="4" width="1" height="1" fill="#c4c4d0"/><rect x="8" y="4" width="1" height="1" fill="#ffff00"/><rect x="9" y="4" width="1" height="1" fill="#c4c4d0"/><rect x="10" y="4" width="1" height="1" fill="#ffff00"/><rect x="11" y="4" width="1" height="1" fill="#c4c4d0"/><rect x="12" y="4" width="2" height="1" fill="#ffff00"/><rect x="14" y="4" width="1" height="1" fill="#808080"/><rect x="0" y="5" width="12" height="1" fill="#808080"/><rect x="12" y="5" width="1" height="1" fill="#000"/><rect x="13" y="5" width="1" height="1" fill="#fff"/><rect x="14" y="5" width="1" height="1" fill="#808080"/><rect x="0" y="6" width="1" height="1" fill="#808080"/><rect x="1" y="6" width="11" height="1" fill="#fff"/><rect x="12" y="6" width="1" height="1" fill="#000"/><rect x="13" y="6" width="1" height="1" fill="#fff"/><rect x="14" y="6" width="1" height="1" fill="#808080"/><rect x="1" y="7" width="1" height="1" fill="#808080"/><rect x="2" y="7" width="1" height="1" fill="#fff"/><rect x="3" y="7" width="1" height="1" fill="#ffff00"/><rect x="4" y="7" width="1" height="1" fill="#c4c4d0"/><rect x="5" y="7" width="1" height="1" fill="#ffff00"/><rect x="6" y="7" width="1" height="1" fill="#c4c4d0"/><rect x="7" y="7" width="1" height="1" fill="#ffff00"/><rect x="8" y="7" width="1" height="1" fill="#c4c4d0"/><rect x="9" y="7" width="1" height="1" fill="#ffff00"/><rect x="10" y="7" width="1" height="1" fill="#c4c4d0"/><rect x="11" y="7" width="1" height="1" fill="#ffff00"/><rect x="12" y="7" width="2" height="1" fill="#000"/><rect x="14" y="7" width="1" height="1" fill="#808080"/><rect x="1" y="8" width="1" height="1" fill="#808080"/><rect x="2" y="8" width="1" height="1" fill="#fff"/><rect x="3" y="8" width="1" height="1" fill="#c4c4d0"/><rect x="4" y="8" width="1" height="1" fill="#ffff00"/><rect x="5" y="8" width="1" height="1" fill="#c4c4d0"/><rect x="6" y="8" width="1" height="1" fill="#ffff00"/><rect x="7" y="8" width="1" height="1" fill="#c4c4d0"/><rect x="8" y="8" width="1" height="1" fill="#ffff00"/><rect x="9" y="8" width="1" height="1" fill="#c4c4d0"/><rect x="10" y="8" width="1" height="1" fill="#ffff00"/><rect x="11" y="8" width="1" height="1" fill="#c4c4d0"/><rect x="12" y="8" width="1" height="1" fill="#ffff00"/><rect x="13" y="8" width="1" height="1" fill="#000"/><rect x="14" y="8" width="1" height="1" fill="#808080"/><rect x="2" y="9" width="1" height="1" fill="#808080"/><rect x="3" y="9" width="1" height="1" fill="#ffff00"/><rect x="4" y="9" width="1" height="1" fill="#c4c4d0"/><rect x="5" y="9" width="1" height="1" fill="#ffff00"/><rect x="6" y="9" width="1" height="1" fill="#c4c4d0"/><rect x="7" y="9" width="1" height="1" fill="#ffff00"/><rect x="8" y="9" width="1" height="1" fill="#c4c4d0"/><rect x="9" y="9" width="1" height="1" fill="#ffff00"/><rect x="10" y="9" width="1" height="1" fill="#c4c4d0"/><rect x="11" y="9" width="1" height="1" fill="#ffff00"/><rect x="12" y="9" width="1" height="1" fill="#c4c4d0"/><rect x="13" y="9" width="1" height="1" fill="#000"/><rect x="14" y="9" width="1" height="1" fill="#808080"/><rect x="2" y="10" width="1" height="1" fill="#808080"/><rect x="3" y="10" width="1" height="1" fill="#fff"/><rect x="4" y="10" width="1" height="1" fill="#ffff00"/><rect x="5" y="10" width="1" height="1" fill="#c4c4d0"/><rect x="6" y="10" width="1" height="1" fill="#ffff00"/><rect x="7" y="10" width="1" height="1" fill="#c4c4d0"/><rect x="8" y="10" width="1" height="1" fill="#ffff00"/><rect x="9" y="10" width="1" height="1" fill="#c4c4d0"/><rect x="10" y="10" width="1" height="1" fill="#ffff00"/><rect x="11" y="10" width="1" height="1" fill="#c4c4d0"/><rect x="12" y="10" width="1" height="1" fill="#ffff00"/><rect x="13" y="10" width="1" height="1" fill="#808080"/><rect x="2" y="11" width="12" height="1" fill="#808080"/></svg>
<div class="trow" style="left:59px;top:67px"><span class="fit" style="letter-spacing:-0.068px">Microsoft Excel Objets</span></div>
<svg class="abs" style="left:58px;top:83px" width="16" height="15" shape-rendering="crispEdges"><rect x="3" y="0" width="9" height="1" fill="#000"/><rect x="3" y="1" width="1" height="1" fill="#000"/><rect x="4" y="1" width="7" height="1" fill="#fff"/><rect x="11" y="1" width="2" height="1" fill="#000"/><rect x="3" y="2" width="1" height="1" fill="#000"/><rect x="4" y="2" width="7" height="1" fill="#fff"/><rect x="11" y="2" width="1" height="1" fill="#000"/><rect x="12" y="2" width="1" height="1" fill="#fff"/><rect x="13" y="2" width="1" height="1" fill="#000"/><rect x="3" y="3" width="1" height="1" fill="#000"/><rect x="4" y="3" width="7" height="1" fill="#fff"/><rect x="11" y="3" width="4" height="1" fill="#000"/><rect x="1" y="4" width="1" height="1" fill="#008000"/><rect x="3" y="4" width="1" height="1" fill="#000"/><rect x="4" y="4" width="1" height="1" fill="#fff"/><rect x="5" y="4" width="1" height="1" fill="#008000"/><rect x="6" y="4" width="1" height="1" fill="#fff"/><rect x="7" y="4" width="1" height="1" fill="#008000"/><rect x="8" y="4" width="6" height="1" fill="#fff"/><rect x="14" y="4" width="1" height="1" fill="#000"/><rect x="0" y="5" width="1" height="1" fill="#008000"/><rect x="1" y="5" width="1" height="1" fill="#fff"/><rect x="2" y="5" width="1" height="1" fill="#008000"/><rect x="3" y="5" width="1" height="1" fill="#a8a0a8"/><rect x="4" y="5" width="1" height="1" fill="#008000"/><rect x="5" y="5" width="1" height="1" fill="#a8a0a8"/><rect x="6" y="5" width="1" height="1" fill="#008000"/><rect x="7" y="5" width="7" height="1" fill="#fff"/><rect x="14" y="5" width="1" height="1" fill="#000"/><rect x="1" y="6" width="1" height="1" fill="#008000"/><rect x="2" y="6" width="1" height="1" fill="#fff"/><rect x="3" y="6" width="1" height="1" fill="#008000"/><rect x="4" y="6" width="1" height="1" fill="#a8a0a8"/><rect x="5" y="6" width="1" height="1" fill="#008000"/><rect x="6" y="6" width="8" height="1" fill="#fff"/><rect x="14" y="6" width="1" height="1" fill="#000"/><rect x="2" y="7" width="1" height="1" fill="#008000"/><rect x="3" y="7" width="1" height="1" fill="#fff"/><rect x="4" y="7" width="1" height="1" fill="#008000"/><rect x="5" y="7" width="1" height="1" fill="#a8a0a8"/><rect x="6" y="7" width="1" height="1" fill="#008000"/><rect x="7" y="7" width="1" height="1" fill="#fff"/><rect x="8" y="7" width="1" height="1" fill="#008000"/><rect x="9" y="7" width="5" height="1" fill="#fff"/><rect x="14" y="7" width="1" height="1" fill="#000"/><rect x="1" y="8" width="1" height="1" fill="#008000"/><rect x="2" y="8" width="1" height="1" fill="#a8a0a8"/><rect x="3" y="8" width="1" height="1" fill="#008000"/><rect x="4" y="8" width="1" height="1" fill="#fff"/><rect x="5" y="8" width="1" height="1" fill="#008000"/><rect x="6" y="8" width="1" height="1" fill="#a8a0a8"/><rect x="7" y="8" width="1" height="1" fill="#008000"/><rect x="8" y="8" width="6" height="1" fill="#fff"/><rect x="14" y="8" width="1" height="1" fill="#000"/><rect x="0" y="9" width="1" height="1" fill="#008000"/><rect x="1" y="9" width="1" height="1" fill="#a8a0a8"/><rect x="2" y="9" width="1" height="1" fill="#008000"/><rect x="3" y="9" width="1" height="1" fill="#a8a0a8"/><rect x="4" y="9" width="1" height="1" fill="#008000"/><rect x="5" y="9" width="1" height="1" fill="#fff"/><rect x="6" y="9" width="1" height="1" fill="#008000"/><rect x="7" y="9" width="7" height="1" fill="#fff"/><rect x="14" y="9" width="1" height="1" fill="#000"/><rect x="1" y="10" width="1" height="1" fill="#008000"/><rect x="3" y="10" width="1" height="1" fill="#008000"/><rect x="4" y="10" width="1" height="1" fill="#fff"/><rect x="5" y="10" width="1" height="1" fill="#008000"/><rect x="6" y="10" width="1" height="1" fill="#fff"/><rect x="7" y="10" width="1" height="1" fill="#008000"/><rect x="8" y="10" width="6" height="1" fill="#fff"/><rect x="14" y="10" width="1" height="1" fill="#000"/><rect x="3" y="11" width="1" height="1" fill="#000"/><rect x="4" y="11" width="2" height="1" fill="#fff"/><rect x="6" y="11" width="1" height="1" fill="#008000"/><rect x="7" y="11" width="1" height="1" fill="#fff"/><rect x="8" y="11" width="1" height="1" fill="#008000"/><rect x="9" y="11" width="5" height="1" fill="#fff"/><rect x="14" y="11" width="1" height="1" fill="#000"/><rect x="3" y="12" width="1" height="1" fill="#000"/><rect x="4" y="12" width="10" height="1" fill="#fff"/><rect x="14" y="12" width="1" height="1" fill="#000"/><rect x="3" y="13" width="1" height="1" fill="#000"/><rect x="4" y="13" width="10" height="1" fill="#fff"/><rect x="14" y="13" width="1" height="1" fill="#000"/><rect x="3" y="14" width="12" height="1" fill="#000"/></svg>
<div class="trow" style="left:78px;top:83px"><span class="fit" style="letter-spacing:-0.180px">Feuil20</span></div>
<svg class="abs" style="left:59px;top:100px" width="16" height="14" shape-rendering="crispEdges"><rect x="3" y="0" width="9" height="1" fill="#808080"/><rect x="3" y="1" width="1" height="1" fill="#808080"/><rect x="4" y="1" width="8" height="1" fill="#fff"/><rect x="12" y="1" width="1" height="1" fill="#000"/><rect x="0" y="2" width="10" height="1" fill="#000"/><rect x="10" y="2" width="2" height="1" fill="#fff"/><rect x="13" y="2" width="1" height="1" fill="#000"/><rect x="0" y="3" width="1" height="1" fill="#000"/><rect x="1" y="3" width="2" height="1" fill="#fff"/><rect x="3" y="3" width="1" height="1" fill="#000"/><rect x="4" y="3" width="2" height="1" fill="#fff"/><rect x="6" y="3" width="1" height="1" fill="#000"/><rect x="7" y="3" width="2" height="1" fill="#fff"/><rect x="9" y="3" width="1" height="1" fill="#000"/><rect x="10" y="3" width="1" height="1" fill="#fff"/><rect x="11" y="3" width="4" height="1" fill="#000"/><rect x="0" y="4" width="10" height="1" fill="#000"/><rect x="10" y="4" width="3" height="1" fill="#fff"/><rect x="13" y="4" width="1" height="1" fill="#a8a0a8"/><rect x="14" y="4" width="1" height="1" fill="#000"/><rect x="0" y="5" width="1" height="1" fill="#000"/><rect x="1" y="5" width="2" height="1" fill="#fff"/><rect x="3" y="5" width="1" height="1" fill="#000"/><rect x="4" y="5" width="2" height="1" fill="#fff"/><rect x="6" y="5" width="1" height="1" fill="#000"/><rect x="7" y="5" width="2" height="1" fill="#fff"/><rect x="9" y="5" width="1" height="1" fill="#000"/><rect x="10" y="5" width="3" height="1" fill="#fff"/><rect x="13" y="5" width="1" height="1" fill="#a8a0a8"/><rect x="14" y="5" width="1" height="1" fill="#000"/><rect x="0" y="6" width="10" height="1" fill="#000"/><rect x="10" y="6" width="3" height="1" fill="#fff"/><rect x="13" y="6" width="1" height="1" fill="#a8a0a8"/><rect x="14" y="6" width="1" height="1" fill="#000"/><rect x="0" y="7" width="1" height="1" fill="#000"/><rect x="1" y="7" width="2" height="1" fill="#fff"/><rect x="3" y="7" width="1" height="1" fill="#000"/><rect x="4" y="7" width="2" height="1" fill="#fff"/><rect x="6" y="7" width="1" height="1" fill="#000"/><rect x="7" y="7" width="2" height="1" fill="#fff"/><rect x="9" y="7" width="1" height="1" fill="#000"/><rect x="10" y="7" width="3" height="1" fill="#fff"/><rect x="13" y="7" width="1" height="1" fill="#a8a0a8"/><rect x="14" y="7" width="1" height="1" fill="#000"/><rect x="0" y="8" width="10" height="1" fill="#000"/><rect x="10" y="8" width="3" height="1" fill="#fff"/><rect x="13" y="8" width="1" height="1" fill="#a8a0a8"/><rect x="14" y="8" width="1" height="1" fill="#000"/><rect x="0" y="9" width="1" height="1" fill="#000"/><rect x="1" y="9" width="2" height="1" fill="#fff"/><rect x="3" y="9" width="1" height="1" fill="#000"/><rect x="4" y="9" width="2" height="1" fill="#fff"/><rect x="6" y="9" width="1" height="1" fill="#000"/><rect x="7" y="9" width="2" height="1" fill="#fff"/><rect x="9" y="9" width="1" height="1" fill="#000"/><rect x="10" y="9" width="3" height="1" fill="#fff"/><rect x="13" y="9" width="1" height="1" fill="#a8a0a8"/><rect x="14" y="9" width="1" height="1" fill="#000"/><rect x="0" y="10" width="10" height="1" fill="#000"/><rect x="10" y="10" width="3" height="1" fill="#fff"/><rect x="13" y="10" width="1" height="1" fill="#a8a0a8"/><rect x="14" y="10" width="1" height="1" fill="#000"/><rect x="3" y="11" width="1" height="1" fill="#808080"/><rect x="4" y="11" width="9" height="1" fill="#fff"/><rect x="13" y="11" width="1" height="1" fill="#a8a0a8"/><rect x="14" y="11" width="1" height="1" fill="#000"/><rect x="3" y="12" width="1" height="1" fill="#808080"/><rect x="4" y="12" width="1" height="1" fill="#fff"/><rect x="5" y="12" width="9" height="1" fill="#a8a0a8"/><rect x="14" y="12" width="1" height="1" fill="#000"/><rect x="4" y="13" width="11" height="1" fill="#000"/></svg>
<div class="trow" style="left:78px;top:99px"><span class="fit" style="letter-spacing:-0.263px">Feuil4 (BC)</span></div>
<svg class="abs" style="left:58px;top:115px" width="16" height="15" shape-rendering="crispEdges"><rect x="3" y="0" width="9" height="1" fill="#000"/><rect x="3" y="1" width="1" height="1" fill="#000"/><rect x="4" y="1" width="7" height="1" fill="#fff"/><rect x="11" y="1" width="2" height="1" fill="#000"/><rect x="3" y="2" width="1" height="1" fill="#000"/><rect x="4" y="2" width="7" height="1" fill="#fff"/><rect x="11" y="2" width="1" height="1" fill="#000"/><rect x="12" y="2" width="1" height="1" fill="#fff"/><rect x="13" y="2" width="1" height="1" fill="#000"/><rect x="3" y="3" width="1" height="1" fill="#000"/><rect x="4" y="3" width="7" height="1" fill="#fff"/><rect x="11" y="3" width="4" height="1" fill="#000"/><rect x="1" y="4" width="1" height="1" fill="#008000"/><rect x="3" y="4" width="1" height="1" fill="#000"/><rect x="4" y="4" width="1" height="1" fill="#fff"/><rect x="5" y="4" width="1" height="1" fill="#008000"/><rect x="6" y="4" width="1" height="1" fill="#fff"/><rect x="7" y="4" width="1" height="1" fill="#008000"/><rect x="8" y="4" width="6" height="1" fill="#fff"/><rect x="14" y="4" width="1" height="1" fill="#000"/><rect x="0" y="5" width="1" height="1" fill="#008000"/><rect x="1" y="5" width="1" height="1" fill="#fff"/><rect x="2" y="5" width="1" height="1" fill="#008000"/><rect x="3" y="5" width="1" height="1" fill="#a8a0a8"/><rect x="4" y="5" width="1" height="1" fill="#008000"/><rect x="5" y="5" width="1" height="1" fill="#a8a0a8"/><rect x="6" y="5" width="1" height="1" fill="#008000"/><rect x="7" y="5" width="7" height="1" fill="#fff"/><rect x="14" y="5" width="1" height="1" fill="#000"/><rect x="1" y="6" width="1" height="1" fill="#008000"/><rect x="2" y="6" width="1" height="1" fill="#fff"/><rect x="3" y="6" width="1" height="1" fill="#008000"/><rect x="4" y="6" width="1" height="1" fill="#a8a0a8"/><rect x="5" y="6" width="1" height="1" fill="#008000"/><rect x="6" y="6" width="8" height="1" fill="#fff"/><rect x="14" y="6" width="1" height="1" fill="#000"/><rect x="2" y="7" width="1" height="1" fill="#008000"/><rect x="3" y="7" width="1" height="1" fill="#fff"/><rect x="4" y="7" width="1" height="1" fill="#008000"/><rect x="5" y="7" width="1" height="1" fill="#a8a0a8"/><rect x="6" y="7" width="1" height="1" fill="#008000"/><rect x="7" y="7" width="1" height="1" fill="#fff"/><rect x="8" y="7" width="1" height="1" fill="#008000"/><rect x="9" y="7" width="5" height="1" fill="#fff"/><rect x="14" y="7" width="1" height="1" fill="#000"/><rect x="1" y="8" width="1" height="1" fill="#008000"/><rect x="2" y="8" width="1" height="1" fill="#a8a0a8"/><rect x="3" y="8" width="1" height="1" fill="#008000"/><rect x="4" y="8" width="1" height="1" fill="#fff"/><rect x="5" y="8" width="1" height="1" fill="#008000"/><rect x="6" y="8" width="1" height="1" fill="#a8a0a8"/><rect x="7" y="8" width="1" height="1" fill="#008000"/><rect x="8" y="8" width="6" height="1" fill="#fff"/><rect x="14" y="8" width="1" height="1" fill="#000"/><rect x="0" y="9" width="1" height="1" fill="#008000"/><rect x="1" y="9" width="1" height="1" fill="#a8a0a8"/><rect x="2" y="9" width="1" height="1" fill="#008000"/><rect x="3" y="9" width="1" height="1" fill="#a8a0a8"/><rect x="4" y="9" width="1" height="1" fill="#008000"/><rect x="5" y="9" width="1" height="1" fill="#fff"/><rect x="6" y="9" width="1" height="1" fill="#008000"/><rect x="7" y="9" width="7" height="1" fill="#fff"/><rect x="14" y="9" width="1" height="1" fill="#000"/><rect x="1" y="10" width="1" height="1" fill="#008000"/><rect x="3" y="10" width="1" height="1" fill="#008000"/><rect x="4" y="10" width="1" height="1" fill="#fff"/><rect x="5" y="10" width="1" height="1" fill="#008000"/><rect x="6" y="10" width="1" height="1" fill="#fff"/><rect x="7" y="10" width="1" height="1" fill="#008000"/><rect x="8" y="10" width="6" height="1" fill="#fff"/><rect x="14" y="10" width="1" height="1" fill="#000"/><rect x="3" y="11" width="1" height="1" fill="#000"/><rect x="4" y="11" width="2" height="1" fill="#fff"/><rect x="6" y="11" width="1" height="1" fill="#008000"/><rect x="7" y="11" width="1" height="1" fill="#fff"/><rect x="8" y="11" width="1" height="1" fill="#008000"/><rect x="9" y="11" width="5" height="1" fill="#fff"/><rect x="14" y="11" width="1" height="1" fill="#000"/><rect x="3" y="12" width="1" height="1" fill="#000"/><rect x="4" y="12" width="10" height="1" fill="#fff"/><rect x="14" y="12" width="1" height="1" fill="#000"/><rect x="3" y="13" width="1" height="1" fill="#000"/><rect x="4" y="13" width="10" height="1" fill="#fff"/><rect x="14" y="13" width="1" height="1" fill="#000"/><rect x="3" y="14" width="12" height="1" fill="#000"/></svg>
<div class="trow" style="left:78px;top:115px"><span class="fit" style="letter-spacing:-0.101px">ThisWorkbook</span></div>
<div class="abs" style="left:24px;top:135px;width:9px;height:9px;border:1px solid #808080;background:#fff"></div><div class="abs" style="left:26px;top:139px;width:5px;height:1px;background:#000"></div>
<svg class="abs" style="left:40px;top:133px" width="15" height="12" shape-rendering="crispEdges"><rect x="3" y="0" width="5" height="1" fill="#808080"/><rect x="2" y="1" width="1" height="1" fill="#808080"/><rect x="8" y="1" width="1" height="1" fill="#808080"/><rect x="1" y="2" width="1" height="1" fill="#808080"/><rect x="3" y="2" width="1" height="1" fill="#c4c4d0"/><rect x="4" y="2" width="1" height="1" fill="#ffff00"/><rect x="5" y="2" width="1" height="1" fill="#c4c4d0"/><rect x="6" y="2" width="1" height="1" fill="#ffff00"/><rect x="7" y="2" width="1" height="1" fill="#c4c4d0"/><rect x="9" y="2" width="6" height="1" fill="#808080"/><rect x="1" y="3" width="1" height="1" fill="#808080"/><rect x="2" y="3" width="1" height="1" fill="#fff"/><rect x="3" y="3" width="1" height="1" fill="#ffff00"/><rect x="4" y="3" width="1" height="1" fill="#c4c4d0"/><rect x="5" y="3" width="1" height="1" fill="#ffff00"/><rect x="6" y="3" width="1" height="1" fill="#c4c4d0"/><rect x="7" y="3" width="1" height="1" fill="#ffff00"/><rect x="8" y="3" width="1" height="1" fill="#c4c4d0"/><rect x="9" y="3" width="1" height="1" fill="#ffff00"/><rect x="10" y="3" width="1" height="1" fill="#c4c4d0"/><rect x="11" y="3" width="1" height="1" fill="#ffff00"/><rect x="12" y="3" width="1" height="1" fill="#c4c4d0"/><rect x="13" y="3" width="1" height="1" fill="#fff"/><rect x="14" y="3" width="1" height="1" fill="#808080"/><rect x="1" y="4" width="1" height="1" fill="#808080"/><rect x="2" y="4" width="1" height="1" fill="#fff"/><rect x="3" y="4" width="1" height="1" fill="#c4c4d0"/><rect x="4" y="4" width="1" height="1" fill="#ffff00"/><rect x="5" y="4" width="1" height="1" fill="#c4c4d0"/><rect x="6" y="4" width="1" height="1" fill="#ffff00"/><rect x="7" y="4" width="1" height="1" fill="#c4c4d0"/><rect x="8" y="4" width="1" height="1" fill="#ffff00"/><rect x="9" y="4" width="1" height="1" fill="#c4c4d0"/><rect x="10" y="4" width="1" height="1" fill="#ffff00"/><rect x="11" y="4" width="1" height="1" fill="#c4c4d0"/><rect x="12" y="4" width="2" height="1" fill="#ffff00"/><rect x="14" y="4" width="1" height="1" fill="#808080"/><rect x="0" y="5" width="12" height="1" fill="#808080"/><rect x="12" y="5" width="1" height="1" fill="#000"/><rect x="13" y="5" width="1" height="1" fill="#fff"/><rect x="14" y="5" width="1" height="1" fill="#808080"/><rect x="0" y="6" width="1" height="1" fill="#808080"/><rect x="1" y="6" width="11" height="1" fill="#fff"/><rect x="12" y="6" width="1" height="1" fill="#000"/><rect x="13" y="6" width="1" height="1" fill="#fff"/><rect x="14" y="6" width="1" height="1" fill="#808080"/><rect x="1" y="7" width="1" height="1" fill="#808080"/><rect x="2" y="7" width="1" height="1" fill="#fff"/><rect x="3" y="7" width="1" height="1" fill="#ffff00"/><rect x="4" y="7" width="1" height="1" fill="#c4c4d0"/><rect x="5" y="7" width="1" height="1" fill="#ffff00"/><rect x="6" y="7" width="1" height="1" fill="#c4c4d0"/><rect x="7" y="7" width="1" height="1" fill="#ffff00"/><rect x="8" y="7" width="1" height="1" fill="#c4c4d0"/><rect x="9" y="7" width="1" height="1" fill="#ffff00"/><rect x="10" y="7" width="1" height="1" fill="#c4c4d0"/><rect x="11" y="7" width="1" height="1" fill="#ffff00"/><rect x="12" y="7" width="2" height="1" fill="#000"/><rect x="14" y="7" width="1" height="1" fill="#808080"/><rect x="1" y="8" width="1" height="1" fill="#808080"/><rect x="2" y="8" width="1" height="1" fill="#fff"/><rect x="3" y="8" width="1" height="1" fill="#c4c4d0"/><rect x="4" y="8" width="1" height="1" fill="#ffff00"/><rect x="5" y="8" width="1" height="1" fill="#c4c4d0"/><rect x="6" y="8" width="1" height="1" fill="#ffff00"/><rect x="7" y="8" width="1" height="1" fill="#c4c4d0"/><rect x="8" y="8" width="1" height="1" fill="#ffff00"/><rect x="9" y="8" width="1" height="1" fill="#c4c4d0"/><rect x="10" y="8" width="1" height="1" fill="#ffff00"/><rect x="11" y="8" width="1" height="1" fill="#c4c4d0"/><rect x="12" y="8" width="1" height="1" fill="#ffff00"/><rect x="13" y="8" width="1" height="1" fill="#000"/><rect x="14" y="8" width="1" height="1" fill="#808080"/><rect x="2" y="9" width="1" height="1" fill="#808080"/><rect x="3" y="9" width="1" height="1" fill="#ffff00"/><rect x="4" y="9" width="1" height="1" fill="#c4c4d0"/><rect x="5" y="9" width="1" height="1" fill="#ffff00"/><rect x="6" y="9" width="1" height="1" fill="#c4c4d0"/><rect x="7" y="9" width="1" height="1" fill="#ffff00"/><rect x="8" y="9" width="1" height="1" fill="#c4c4d0"/><rect x="9" y="9" width="1" height="1" fill="#ffff00"/><rect x="10" y="9" width="1" height="1" fill="#c4c4d0"/><rect x="11" y="9" width="1" height="1" fill="#ffff00"/><rect x="12" y="9" width="1" height="1" fill="#c4c4d0"/><rect x="13" y="9" width="1" height="1" fill="#000"/><rect x="14" y="9" width="1" height="1" fill="#808080"/><rect x="2" y="10" width="1" height="1" fill="#808080"/><rect x="3" y="10" width="1" height="1" fill="#fff"/><rect x="4" y="10" width="1" height="1" fill="#ffff00"/><rect x="5" y="10" width="1" height="1" fill="#c4c4d0"/><rect x="6" y="10" width="1" height="1" fill="#ffff00"/><rect x="7" y="10" width="1" height="1" fill="#c4c4d0"/><rect x="8" y="10" width="1" height="1" fill="#ffff00"/><rect x="9" y="10" width="1" height="1" fill="#c4c4d0"/><rect x="10" y="10" width="1" height="1" fill="#ffff00"/><rect x="11" y="10" width="1" height="1" fill="#c4c4d0"/><rect x="12" y="10" width="1" height="1" fill="#ffff00"/><rect x="13" y="10" width="1" height="1" fill="#808080"/><rect x="2" y="11" width="12" height="1" fill="#808080"/></svg>
<div class="trow" style="left:59px;top:131px"><span class="fit" style="letter-spacing:-0.272px">Feuilles</span></div>
<svg class="abs" style="left:60px;top:149px" width="12" height="12" shape-rendering="crispEdges"><rect x="0" y="0" width="12" height="1" fill="#000080"/><rect x="0" y="1" width="12" height="1" fill="#000080"/><rect x="0" y="2" width="1" height="1" fill="#000"/><rect x="1" y="2" width="10" height="1" fill="#fff"/><rect x="11" y="2" width="1" height="1" fill="#000"/><rect x="0" y="3" width="1" height="1" fill="#000"/><rect x="1" y="3" width="1" height="1" fill="#fff"/><rect x="2" y="3" width="3" height="1" fill="#000"/><rect x="5" y="3" width="1" height="1" fill="#fff"/><rect x="6" y="3" width="4" height="1" fill="#000"/><rect x="10" y="3" width="1" height="1" fill="#fff"/><rect x="11" y="3" width="1" height="1" fill="#000"/><rect x="0" y="4" width="1" height="1" fill="#000"/><rect x="1" y="4" width="5" height="1" fill="#fff"/><rect x="6" y="4" width="1" height="1" fill="#000"/><rect x="7" y="4" width="2" height="1" fill="#fff"/><rect x="9" y="4" width="1" height="1" fill="#000"/><rect x="10" y="4" width="1" height="1" fill="#fff"/><rect x="11" y="4" width="1" height="1" fill="#000"/><rect x="0" y="5" width="1" height="1" fill="#000"/><rect x="1" y="5" width="5" height="1" fill="#fff"/><rect x="6" y="5" width="4" height="1" fill="#000"/><rect x="10" y="5" width="1" height="1" fill="#fff"/><rect x="11" y="5" width="1" height="1" fill="#000"/><rect x="0" y="6" width="1" height="1" fill="#000"/><rect x="1" y="6" width="10" height="1" fill="#fff"/><rect x="11" y="6" width="1" height="1" fill="#000"/><rect x="0" y="7" width="1" height="1" fill="#000"/><rect x="1" y="7" width="1" height="1" fill="#fff"/><rect x="2" y="7" width="3" height="1" fill="#000"/><rect x="5" y="7" width="1" height="1" fill="#fff"/><rect x="6" y="7" width="4" height="1" fill="#000"/><rect x="10" y="7" width="1" height="1" fill="#fff"/><rect x="11" y="7" width="1" height="1" fill="#000"/><rect x="0" y="8" width="1" height="1" fill="#000"/><rect x="1" y="8" width="5" height="1" fill="#fff"/><rect x="6" y="8" width="1" height="1" fill="#000"/><rect x="7" y="8" width="2" height="1" fill="#fff"/><rect x="9" y="8" width="1" height="1" fill="#000"/><rect x="10" y="8" width="1" height="1" fill="#fff"/><rect x="11" y="8" width="1" height="1" fill="#000"/><rect x="0" y="9" width="1" height="1" fill="#000"/><rect x="1" y="9" width="5" height="1" fill="#fff"/><rect x="6" y="9" width="4" height="1" fill="#000"/><rect x="10" y="9" width="1" height="1" fill="#fff"/><rect x="11" y="9" width="1" height="1" fill="#000"/><rect x="0" y="10" width="1" height="1" fill="#000"/><rect x="1" y="10" width="10" height="1" fill="#fff"/><rect x="11" y="10" width="1" height="1" fill="#000"/><rect x="0" y="11" width="12" height="1" fill="#000"/></svg>
<div class="abs" style="left:77px;top:147px;width:56px;height:16px;background:#f3f2f5"></div>
<div class="trow" style="left:78px;top:147px"><span class="fit" style="letter-spacing:-0.127px">UserForm1</span></div>
<div class="abs" style="left:24px;top:167px;width:9px;height:9px;border:1px solid #808080;background:#fff"></div><div class="abs" style="left:26px;top:171px;width:5px;height:1px;background:#000"></div>
<svg class="abs" style="left:40px;top:165px" width="15" height="12" shape-rendering="crispEdges"><rect x="3" y="0" width="5" height="1" fill="#808080"/><rect x="2" y="1" width="1" height="1" fill="#808080"/><rect x="8" y="1" width="1" height="1" fill="#808080"/><rect x="1" y="2" width="1" height="1" fill="#808080"/><rect x="3" y="2" width="1" height="1" fill="#c4c4d0"/><rect x="4" y="2" width="1" height="1" fill="#ffff00"/><rect x="5" y="2" width="1" height="1" fill="#c4c4d0"/><rect x="6" y="2" width="1" height="1" fill="#ffff00"/><rect x="7" y="2" width="1" height="1" fill="#c4c4d0"/><rect x="9" y="2" width="6" height="1" fill="#808080"/><rect x="1" y="3" width="1" height="1" fill="#808080"/><rect x="2" y="3" width="1" height="1" fill="#fff"/><rect x="3" y="3" width="1" height="1" fill="#ffff00"/><rect x="4" y="3" width="1" height="1" fill="#c4c4d0"/><rect x="5" y="3" width="1" height="1" fill="#ffff00"/><rect x="6" y="3" width="1" height="1" fill="#c4c4d0"/><rect x="7" y="3" width="1" height="1" fill="#ffff00"/><rect x="8" y="3" width="1" height="1" fill="#c4c4d0"/><rect x="9" y="3" width="1" height="1" fill="#ffff00"/><rect x="10" y="3" width="1" height="1" fill="#c4c4d0"/><rect x="11" y="3" width="1" height="1" fill="#ffff00"/><rect x="12" y="3" width="1" height="1" fill="#c4c4d0"/><rect x="13" y="3" width="1" height="1" fill="#fff"/><rect x="14" y="3" width="1" height="1" fill="#808080"/><rect x="1" y="4" width="1" height="1" fill="#808080"/><rect x="2" y="4" width="1" height="1" fill="#fff"/><rect x="3" y="4" width="1" height="1" fill="#c4c4d0"/><rect x="4" y="4" width="1" height="1" fill="#ffff00"/><rect x="5" y="4" width="1" height="1" fill="#c4c4d0"/><rect x="6" y="4" width="1" height="1" fill="#ffff00"/><rect x="7" y="4" width="1" height="1" fill="#c4c4d0"/><rect x="8" y="4" width="1" height="1" fill="#ffff00"/><rect x="9" y="4" width="1" height="1" fill="#c4c4d0"/><rect x="10" y="4" width="1" height="1" fill="#ffff00"/><rect x="11" y="4" width="1" height="1" fill="#c4c4d0"/><rect x="12" y="4" width="2" height="1" fill="#ffff00"/><rect x="14" y="4" width="1" height="1" fill="#808080"/><rect x="0" y="5" width="12" height="1" fill="#808080"/><rect x="12" y="5" width="1" height="1" fill="#000"/><rect x="13" y="5" width="1" height="1" fill="#fff"/><rect x="14" y="5" width="1" height="1" fill="#808080"/><rect x="0" y="6" width="1" height="1" fill="#808080"/><rect x="1" y="6" width="11" height="1" fill="#fff"/><rect x="12" y="6" width="1" height="1" fill="#000"/><rect x="13" y="6" width="1" height="1" fill="#fff"/><rect x="14" y="6" width="1" height="1" fill="#808080"/><rect x="1" y="7" width="1" height="1" fill="#808080"/><rect x="2" y="7" width="1" height="1" fill="#fff"/><rect x="3" y="7" width="1" height="1" fill="#ffff00"/><rect x="4" y="7" width="1" height="1" fill="#c4c4d0"/><rect x="5" y="7" width="1" height="1" fill="#ffff00"/><rect x="6" y="7" width="1" height="1" fill="#c4c4d0"/><rect x="7" y="7" width="1" height="1" fill="#ffff00"/><rect x="8" y="7" width="1" height="1" fill="#c4c4d0"/><rect x="9" y="7" width="1" height="1" fill="#ffff00"/><rect x="10" y="7" width="1" height="1" fill="#c4c4d0"/><rect x="11" y="7" width="1" height="1" fill="#ffff00"/><rect x="12" y="7" width="2" height="1" fill="#000"/><rect x="14" y="7" width="1" height="1" fill="#808080"/><rect x="1" y="8" width="1" height="1" fill="#808080"/><rect x="2" y="8" width="1" height="1" fill="#fff"/><rect x="3" y="8" width="1" height="1" fill="#c4c4d0"/><rect x="4" y="8" width="1" height="1" fill="#ffff00"/><rect x="5" y="8" width="1" height="1" fill="#c4c4d0"/><rect x="6" y="8" width="1" height="1" fill="#ffff00"/><rect x="7" y="8" width="1" height="1" fill="#c4c4d0"/><rect x="8" y="8" width="1" height="1" fill="#ffff00"/><rect x="9" y="8" width="1" height="1" fill="#c4c4d0"/><rect x="10" y="8" width="1" height="1" fill="#ffff00"/><rect x="11" y="8" width="1" height="1" fill="#c4c4d0"/><rect x="12" y="8" width="1" height="1" fill="#ffff00"/><rect x="13" y="8" width="1" height="1" fill="#000"/><rect x="14" y="8" width="1" height="1" fill="#808080"/><rect x="2" y="9" width="1" height="1" fill="#808080"/><rect x="3" y="9" width="1" height="1" fill="#ffff00"/><rect x="4" y="9" width="1" height="1" fill="#c4c4d0"/><rect x="5" y="9" width="1" height="1" fill="#ffff00"/><rect x="6" y="9" width="1" height="1" fill="#c4c4d0"/><rect x="7" y="9" width="1" height="1" fill="#ffff00"/><rect x="8" y="9" width="1" height="1" fill="#c4c4d0"/><rect x="9" y="9" width="1" height="1" fill="#ffff00"/><rect x="10" y="9" width="1" height="1" fill="#c4c4d0"/><rect x="11" y="9" width="1" height="1" fill="#ffff00"/><rect x="12" y="9" width="1" height="1" fill="#c4c4d0"/><rect x="13" y="9" width="1" height="1" fill="#000"/><rect x="14" y="9" width="1" height="1" fill="#808080"/><rect x="2" y="10" width="1" height="1" fill="#808080"/><rect x="3" y="10" width="1" height="1" fill="#fff"/><rect x="4" y="10" width="1" height="1" fill="#ffff00"/><rect x="5" y="10" width="1" height="1" fill="#c4c4d0"/><rect x="6" y="10" width="1" height="1" fill="#ffff00"/><rect x="7" y="10" width="1" height="1" fill="#c4c4d0"/><rect x="8" y="10" width="1" height="1" fill="#ffff00"/><rect x="9" y="10" width="1" height="1" fill="#c4c4d0"/><rect x="10" y="10" width="1" height="1" fill="#ffff00"/><rect x="11" y="10" width="1" height="1" fill="#c4c4d0"/><rect x="12" y="10" width="1" height="1" fill="#ffff00"/><rect x="13" y="10" width="1" height="1" fill="#808080"/><rect x="2" y="11" width="12" height="1" fill="#808080"/></svg>
<div class="trow" style="left:59px;top:163px"><span class="fit" style="letter-spacing:-0.263px">Modules</span></div>
<svg class="abs" style="left:57px;top:180px" width="17" height="13" shape-rendering="crispEdges"><rect x="9" y="0" width="1" height="1" fill="#000"/><rect x="13" y="0" width="1" height="1" fill="#000"/><rect x="8" y="1" width="1" height="1" fill="#000"/><rect x="9" y="1" width="1" height="1" fill="#ffff00"/><rect x="10" y="1" width="1" height="1" fill="#000"/><rect x="12" y="1" width="1" height="1" fill="#000"/><rect x="13" y="1" width="1" height="1" fill="#ff00ff"/><rect x="14" y="1" width="1" height="1" fill="#000"/><rect x="7" y="2" width="1" height="1" fill="#000"/><rect x="8" y="2" width="1" height="1" fill="#ffff00"/><rect x="9" y="2" width="2" height="1" fill="#000"/><rect x="12" y="2" width="2" height="1" fill="#000"/><rect x="14" y="2" width="1" height="1" fill="#ff00ff"/><rect x="15" y="2" width="1" height="1" fill="#000"/><rect x="8" y="3" width="1" height="1" fill="#000"/><rect x="9" y="3" width="1" height="1" fill="#ffff00"/><rect x="10" y="3" width="1" height="1" fill="#000"/><rect x="12" y="3" width="1" height="1" fill="#000"/><rect x="13" y="3" width="1" height="1" fill="#ff00ff"/><rect x="14" y="3" width="2" height="1" fill="#000"/><rect x="6" y="4" width="2" height="1" fill="#000"/><rect x="8" y="4" width="1" height="1" fill="#ffff00"/><rect x="9" y="4" width="1" height="1" fill="#000"/><rect x="13" y="4" width="1" height="1" fill="#000"/><rect x="14" y="4" width="1" height="1" fill="#ff00ff"/><rect x="15" y="4" width="1" height="1" fill="#000"/><rect x="5" y="5" width="1" height="1" fill="#000"/><rect x="8" y="5" width="1" height="1" fill="#000"/><rect x="10" y="5" width="1" height="1" fill="#000"/><rect x="12" y="5" width="1" height="1" fill="#000"/><rect x="14" y="5" width="1" height="1" fill="#000"/><rect x="2" y="6" width="1" height="1" fill="#000"/><rect x="4" y="6" width="1" height="1" fill="#000"/><rect x="11" y="6" width="1" height="1" fill="#000"/><rect x="1" y="7" width="1" height="1" fill="#000"/><rect x="2" y="7" width="1" height="1" fill="#ff00ff"/><rect x="3" y="7" width="1" height="1" fill="#000"/><rect x="6" y="7" width="3" height="1" fill="#000"/><rect x="10" y="7" width="1" height="1" fill="#000"/><rect x="12" y="7" width="1" height="1" fill="#000"/><rect x="1" y="8" width="2" height="1" fill="#000"/><rect x="3" y="8" width="1" height="1" fill="#ff00ff"/><rect x="4" y="8" width="2" height="1" fill="#000"/><rect x="6" y="8" width="1" height="1" fill="#00ff00"/><rect x="7" y="8" width="1" height="1" fill="#000"/><rect x="8" y="8" width="1" height="1" fill="#00ff00"/><rect x="9" y="8" width="1" height="1" fill="#000"/><rect x="13" y="8" width="1" height="1" fill="#000"/><rect x="1" y="9" width="1" height="1" fill="#000"/><rect x="2" y="9" width="1" height="1" fill="#ff00ff"/><rect x="3" y="9" width="2" height="1" fill="#000"/><rect x="6" y="9" width="1" height="1" fill="#000"/><rect x="7" y="9" width="1" height="1" fill="#00ff00"/><rect x="8" y="9" width="1" height="1" fill="#000"/><rect x="9" y="9" width="1" height="1" fill="#00ff00"/><rect x="10" y="9" width="1" height="1" fill="#000"/><rect x="12" y="9" width="3" height="1" fill="#000"/><rect x="2" y="10" width="1" height="1" fill="#000"/><rect x="3" y="10" width="1" height="1" fill="#ff00ff"/><rect x="4" y="10" width="1" height="1" fill="#000"/><rect x="7" y="10" width="3" height="1" fill="#000"/><rect x="11" y="10" width="1" height="1" fill="#000"/><rect x="12" y="10" width="1" height="1" fill="#00ffff"/><rect x="13" y="10" width="1" height="1" fill="#000"/><rect x="14" y="10" width="1" height="1" fill="#00ffff"/><rect x="15" y="10" width="1" height="1" fill="#000"/><rect x="3" y="11" width="1" height="1" fill="#000"/><rect x="12" y="11" width="1" height="1" fill="#000"/><rect x="13" y="11" width="1" height="1" fill="#00ffff"/><rect x="14" y="11" width="1" height="1" fill="#000"/><rect x="15" y="11" width="1" height="1" fill="#00ffff"/><rect x="16" y="11" width="1" height="1" fill="#000"/><rect x="13" y="12" width="3" height="1" fill="#000"/></svg>
<div class="trow" style="left:78px;top:179px"><span class="fit" style="letter-spacing:-0.034px">Module1</span></div>
<svg class="abs" style="left:57px;top:196px" width="17" height="13" shape-rendering="crispEdges"><rect x="9" y="0" width="1" height="1" fill="#000"/><rect x="13" y="0" width="1" height="1" fill="#000"/><rect x="8" y="1" width="1" height="1" fill="#000"/><rect x="9" y="1" width="1" height="1" fill="#ffff00"/><rect x="10" y="1" width="1" height="1" fill="#000"/><rect x="12" y="1" width="1" height="1" fill="#000"/><rect x="13" y="1" width="1" height="1" fill="#ff00ff"/><rect x="14" y="1" width="1" height="1" fill="#000"/><rect x="7" y="2" width="1" height="1" fill="#000"/><rect x="8" y="2" width="1" height="1" fill="#ffff00"/><rect x="9" y="2" width="2" height="1" fill="#000"/><rect x="12" y="2" width="2" height="1" fill="#000"/><rect x="14" y="2" width="1" height="1" fill="#ff00ff"/><rect x="15" y="2" width="1" height="1" fill="#000"/><rect x="8" y="3" width="1" height="1" fill="#000"/><rect x="9" y="3" width="1" height="1" fill="#ffff00"/><rect x="10" y="3" width="1" height="1" fill="#000"/><rect x="12" y="3" width="1" height="1" fill="#000"/><rect x="13" y="3" width="1" height="1" fill="#ff00ff"/><rect x="14" y="3" width="2" height="1" fill="#000"/><rect x="6" y="4" width="2" height="1" fill="#000"/><rect x="8" y="4" width="1" height="1" fill="#ffff00"/><rect x="9" y="4" width="1" height="1" fill="#000"/><rect x="13" y="4" width="1" height="1" fill="#000"/><rect x="14" y="4" width="1" height="1" fill="#ff00ff"/><rect x="15" y="4" width="1" height="1" fill="#000"/><rect x="5" y="5" width="1" height="1" fill="#000"/><rect x="8" y="5" width="1" height="1" fill="#000"/><rect x="10" y="5" width="1" height="1" fill="#000"/><rect x="12" y="5" width="1" height="1" fill="#000"/><rect x="14" y="5" width="1" height="1" fill="#000"/><rect x="2" y="6" width="1" height="1" fill="#000"/><rect x="4" y="6" width="1" height="1" fill="#000"/><rect x="11" y="6" width="1" height="1" fill="#000"/><rect x="1" y="7" width="1" height="1" fill="#000"/><rect x="2" y="7" width="1" height="1" fill="#ff00ff"/><rect x="3" y="7" width="1" height="1" fill="#000"/><rect x="6" y="7" width="3" height="1" fill="#000"/><rect x="10" y="7" width="1" height="1" fill="#000"/><rect x="12" y="7" width="1" height="1" fill="#000"/><rect x="1" y="8" width="2" height="1" fill="#000"/><rect x="3" y="8" width="1" height="1" fill="#ff00ff"/><rect x="4" y="8" width="2" height="1" fill="#000"/><rect x="6" y="8" width="1" height="1" fill="#00ff00"/><rect x="7" y="8" width="1" height="1" fill="#000"/><rect x="8" y="8" width="1" height="1" fill="#00ff00"/><rect x="9" y="8" width="1" height="1" fill="#000"/><rect x="13" y="8" width="1" height="1" fill="#000"/><rect x="1" y="9" width="1" height="1" fill="#000"/><rect x="2" y="9" width="1" height="1" fill="#ff00ff"/><rect x="3" y="9" width="2" height="1" fill="#000"/><rect x="6" y="9" width="1" height="1" fill="#000"/><rect x="7" y="9" width="1" height="1" fill="#00ff00"/><rect x="8" y="9" width="1" height="1" fill="#000"/><rect x="9" y="9" width="1" height="1" fill="#00ff00"/><rect x="10" y="9" width="1" height="1" fill="#000"/><rect x="12" y="9" width="3" height="1" fill="#000"/><rect x="2" y="10" width="1" height="1" fill="#000"/><rect x="3" y="10" width="1" height="1" fill="#ff00ff"/><rect x="4" y="10" width="1" height="1" fill="#000"/><rect x="7" y="10" width="3" height="1" fill="#000"/><rect x="11" y="10" width="1" height="1" fill="#000"/><rect x="12" y="10" width="1" height="1" fill="#00ffff"/><rect x="13" y="10" width="1" height="1" fill="#000"/><rect x="14" y="10" width="1" height="1" fill="#00ffff"/><rect x="15" y="10" width="1" height="1" fill="#000"/><rect x="3" y="11" width="1" height="1" fill="#000"/><rect x="12" y="11" width="1" height="1" fill="#000"/><rect x="13" y="11" width="1" height="1" fill="#00ffff"/><rect x="14" y="11" width="1" height="1" fill="#000"/><rect x="15" y="11" width="1" height="1" fill="#00ffff"/><rect x="16" y="11" width="1" height="1" fill="#000"/><rect x="13" y="12" width="3" height="1" fill="#000"/></svg>
<div class="trow" style="left:78px;top:195px"><span class="fit" style="letter-spacing:-0.034px">Module2</span></div>
<div class="abs" style="left:24px;top:215px;width:9px;height:9px;border:1px solid #808080;background:#fff"></div><div class="abs" style="left:26px;top:219px;width:5px;height:1px;background:#000"></div><div class="abs" style="left:28px;top:217px;width:1px;height:5px;background:#000"></div>
<svg class="abs" style="left:41px;top:213px" width="14" height="12" shape-rendering="crispEdges"><rect x="2" y="0" width="5" height="1" fill="#808080"/><rect x="1" y="1" width="1" height="1" fill="#808080"/><rect x="2" y="1" width="1" height="1" fill="#c4c4d0"/><rect x="3" y="1" width="1" height="1" fill="#ffff00"/><rect x="4" y="1" width="1" height="1" fill="#c4c4d0"/><rect x="5" y="1" width="1" height="1" fill="#ffff00"/><rect x="6" y="1" width="1" height="1" fill="#c4c4d0"/><rect x="7" y="1" width="1" height="1" fill="#808080"/><rect x="0" y="2" width="1" height="1" fill="#808080"/><rect x="1" y="2" width="1" height="1" fill="#c4c4d0"/><rect x="2" y="2" width="1" height="1" fill="#ffff00"/><rect x="3" y="2" width="1" height="1" fill="#c4c4d0"/><rect x="4" y="2" width="1" height="1" fill="#ffff00"/><rect x="5" y="2" width="1" height="1" fill="#c4c4d0"/><rect x="6" y="2" width="1" height="1" fill="#ffff00"/><rect x="7" y="2" width="1" height="1" fill="#c4c4d0"/><rect x="8" y="2" width="6" height="1" fill="#808080"/><rect x="0" y="3" width="1" height="1" fill="#808080"/><rect x="1" y="3" width="12" height="1" fill="#fff"/><rect x="13" y="3" width="1" height="1" fill="#808080"/><rect x="0" y="4" width="1" height="1" fill="#808080"/><rect x="1" y="4" width="1" height="1" fill="#fff"/><rect x="2" y="4" width="1" height="1" fill="#ffff00"/><rect x="3" y="4" width="1" height="1" fill="#c4c4d0"/><rect x="4" y="4" width="1" height="1" fill="#ffff00"/><rect x="5" y="4" width="1" height="1" fill="#c4c4d0"/><rect x="6" y="4" width="1" height="1" fill="#ffff00"/><rect x="7" y="4" width="1" height="1" fill="#c4c4d0"/><rect x="8" y="4" width="1" height="1" fill="#ffff00"/><rect x="9" y="4" width="1" height="1" fill="#c4c4d0"/><rect x="10" y="4" width="1" height="1" fill="#ffff00"/><rect x="11" y="4" width="1" height="1" fill="#c4c4d0"/><rect x="12" y="4" width="1" height="1" fill="#ffff00"/><rect x="13" y="4" width="1" height="1" fill="#808080"/><rect x="0" y="5" width="1" height="1" fill="#808080"/><rect x="1" y="5" width="1" height="1" fill="#fff"/><rect x="2" y="5" width="1" height="1" fill="#c4c4d0"/><rect x="3" y="5" width="1" height="1" fill="#ffff00"/><rect x="4" y="5" width="1" height="1" fill="#c4c4d0"/><rect x="5" y="5" width="1" height="1" fill="#ffff00"/><rect x="6" y="5" width="1" height="1" fill="#c4c4d0"/><rect x="7" y="5" width="1" height="1" fill="#ffff00"/><rect x="8" y="5" width="1" height="1" fill="#c4c4d0"/><rect x="9" y="5" width="1" height="1" fill="#ffff00"/><rect x="10" y="5" width="1" height="1" fill="#c4c4d0"/><rect x="11" y="5" width="1" height="1" fill="#ffff00"/><rect x="12" y="5" width="1" height="1" fill="#c4c4d0"/><rect x="13" y="5" width="1" height="1" fill="#808080"/><rect x="0" y="6" width="1" height="1" fill="#808080"/><rect x="1" y="6" width="1" height="1" fill="#fff"/><rect x="2" y="6" width="1" height="1" fill="#ffff00"/><rect x="3" y="6" width="1" height="1" fill="#c4c4d0"/><rect x="4" y="6" width="1" height="1" fill="#ffff00"/><rect x="5" y="6" width="1" height="1" fill="#c4c4d0"/><rect x="6" y="6" width="1" height="1" fill="#ffff00"/><rect x="7" y="6" width="1" height="1" fill="#c4c4d0"/><rect x="8" y="6" width="1" height="1" fill="#ffff00"/><rect x="9" y="6" width="1" height="1" fill="#c4c4d0"/><rect x="10" y="6" width="1" height="1" fill="#ffff00"/><rect x="11" y="6" width="1" height="1" fill="#c4c4d0"/><rect x="12" y="6" width="1" height="1" fill="#ffff00"/><rect x="13" y="6" width="1" height="1" fill="#808080"/><rect x="0" y="7" width="1" height="1" fill="#808080"/><rect x="1" y="7" width="1" height="1" fill="#fff"/><rect x="2" y="7" width="1" height="1" fill="#c4c4d0"/><rect x="3" y="7" width="1" height="1" fill="#ffff00"/><rect x="4" y="7" width="1" height="1" fill="#c4c4d0"/><rect x="5" y="7" width="1" height="1" fill="#ffff00"/><rect x="6" y="7" width="1" height="1" fill="#c4c4d0"/><rect x="7" y="7" width="1" height="1" fill="#ffff00"/><rect x="8" y="7" width="1" height="1" fill="#c4c4d0"/><rect x="9" y="7" width="1" height="1" fill="#ffff00"/><rect x="10" y="7" width="1" height="1" fill="#c4c4d0"/><rect x="11" y="7" width="1" height="1" fill="#ffff00"/><rect x="12" y="7" width="1" height="1" fill="#c4c4d0"/><rect x="13" y="7" width="1" height="1" fill="#808080"/><rect x="0" y="8" width="1" height="1" fill="#808080"/><rect x="1" y="8" width="1" height="1" fill="#fff"/><rect x="2" y="8" width="1" height="1" fill="#ffff00"/><rect x="3" y="8" width="1" height="1" fill="#c4c4d0"/><rect x="4" y="8" width="1" height="1" fill="#ffff00"/><rect x="5" y="8" width="1" height="1" fill="#c4c4d0"/><rect x="6" y="8" width="1" height="1" fill="#ffff00"/><rect x="7" y="8" width="1" height="1" fill="#c4c4d0"/><rect x="8" y="8" width="1" height="1" fill="#ffff00"/><rect x="9" y="8" width="1" height="1" fill="#c4c4d0"/><rect x="10" y="8" width="1" height="1" fill="#ffff00"/><rect x="11" y="8" width="1" height="1" fill="#c4c4d0"/><rect x="12" y="8" width="1" height="1" fill="#ffff00"/><rect x="13" y="8" width="1" height="1" fill="#808080"/><rect x="0" y="9" width="1" height="1" fill="#808080"/><rect x="1" y="9" width="1" height="1" fill="#fff"/><rect x="2" y="9" width="1" height="1" fill="#c4c4d0"/><rect x="3" y="9" width="1" height="1" fill="#ffff00"/><rect x="4" y="9" width="1" height="1" fill="#c4c4d0"/><rect x="5" y="9" width="1" height="1" fill="#ffff00"/><rect x="6" y="9" width="1" height="1" fill="#c4c4d0"/><rect x="7" y="9" width="1" height="1" fill="#ffff00"/><rect x="8" y="9" width="1" height="1" fill="#c4c4d0"/><rect x="9" y="9" width="1" height="1" fill="#ffff00"/><rect x="10" y="9" width="1" height="1" fill="#c4c4d0"/><rect x="11" y="9" width="1" height="1" fill="#ffff00"/><rect x="12" y="9" width="1" height="1" fill="#c4c4d0"/><rect x="13" y="9" width="1" height="1" fill="#808080"/><rect x="0" y="10" width="1" height="1" fill="#808080"/><rect x="1" y="10" width="1" height="1" fill="#fff"/><rect x="2" y="10" width="1" height="1" fill="#ffff00"/><rect x="3" y="10" width="1" height="1" fill="#c4c4d0"/><rect x="4" y="10" width="1" height="1" fill="#ffff00"/><rect x="5" y="10" width="1" height="1" fill="#c4c4d0"/><rect x="6" y="10" width="1" height="1" fill="#ffff00"/><rect x="7" y="10" width="1" height="1" fill="#c4c4d0"/><rect x="8" y="10" width="1" height="1" fill="#ffff00"/><rect x="9" y="10" width="1" height="1" fill="#c4c4d0"/><rect x="10" y="10" width="1" height="1" fill="#ffff00"/><rect x="11" y="10" width="1" height="1" fill="#c4c4d0"/><rect x="12" y="10" width="1" height="1" fill="#ffff00"/><rect x="13" y="10" width="1" height="1" fill="#808080"/><rect x="0" y="11" width="14" height="1" fill="#808080"/></svg>
<div class="trow" style="left:59px;top:211px"><span class="fit" style="letter-spacing:-0.030px">Références</span></div>
<div class="abs" style="left:5px;top:231px;width:9px;height:9px;border:1px solid #808080;background:#fff"></div><div class="abs" style="left:7px;top:235px;width:5px;height:1px;background:#000"></div><div class="abs" style="left:9px;top:233px;width:1px;height:5px;background:#000"></div>
<svg class="abs" style="left:20px;top:227px" width="16" height="16" shape-rendering="crispEdges"><rect x="12" y="0" width="2" height="1" fill="#000"/><rect x="11" y="1" width="1" height="1" fill="#000"/><rect x="12" y="1" width="2" height="1" fill="#00ff00"/><rect x="14" y="1" width="1" height="1" fill="#000"/><rect x="2" y="2" width="2" height="1" fill="#000"/><rect x="11" y="2" width="3" height="1" fill="#000"/><rect x="2" y="3" width="1" height="1" fill="#000"/><rect x="3" y="3" width="1" height="1" fill="#00ffff"/><rect x="4" y="3" width="3" height="1" fill="#000"/><rect x="9" y="3" width="3" height="1" fill="#000"/><rect x="2" y="4" width="2" height="1" fill="#000"/><rect x="4" y="4" width="2" height="1" fill="#00ffff"/><rect x="6" y="4" width="1" height="1" fill="#000"/><rect x="8" y="4" width="1" height="1" fill="#000"/><rect x="9" y="4" width="2" height="1" fill="#ffff00"/><rect x="11" y="4" width="1" height="1" fill="#000"/><rect x="2" y="5" width="1" height="1" fill="#000"/><rect x="3" y="5" width="1" height="1" fill="#fff"/><rect x="4" y="5" width="3" height="1" fill="#000"/><rect x="9" y="5" width="2" height="1" fill="#000"/><rect x="12" y="5" width="1" height="1" fill="#000"/><rect x="2" y="6" width="1" height="1" fill="#000"/><rect x="3" y="6" width="1" height="1" fill="#fff"/><rect x="4" y="6" width="1" height="1" fill="#000"/><rect x="5" y="6" width="1" height="1" fill="#00ffff"/><rect x="6" y="6" width="3" height="1" fill="#000"/><rect x="11" y="6" width="1" height="1" fill="#000"/><rect x="12" y="6" width="1" height="1" fill="#ff00ff"/><rect x="13" y="6" width="1" height="1" fill="#000"/><rect x="2" y="7" width="4" height="1" fill="#000"/><rect x="6" y="7" width="2" height="1" fill="#00ffff"/><rect x="8" y="7" width="1" height="1" fill="#000"/><rect x="11" y="7" width="1" height="1" fill="#000"/><rect x="12" y="7" width="1" height="1" fill="#ff00ff"/><rect x="13" y="7" width="1" height="1" fill="#000"/><rect x="3" y="8" width="2" height="1" fill="#000"/><rect x="5" y="8" width="3" height="1" fill="#fff"/><rect x="8" y="8" width="1" height="1" fill="#000"/><rect x="12" y="8" width="2" height="1" fill="#000"/><rect x="1" y="9" width="2" height="1" fill="#000"/><rect x="4" y="9" width="1" height="1" fill="#000"/><rect x="5" y="9" width="3" height="1" fill="#fff"/><rect x="8" y="9" width="1" height="1" fill="#000"/><rect x="9" y="9" width="1" height="1" fill="#00ffff"/><rect x="10" y="9" width="2" height="1" fill="#000"/><rect x="0" y="10" width="1" height="1" fill="#000"/><rect x="4" y="10" width="3" height="1" fill="#000"/><rect x="7" y="10" width="1" height="1" fill="#fff"/><rect x="8" y="10" width="1" height="1" fill="#000"/><rect x="10" y="10" width="2" height="1" fill="#00ffff"/><rect x="12" y="10" width="2" height="1" fill="#000"/><rect x="1" y="11" width="2" height="1" fill="#000"/><rect x="7" y="11" width="2" height="1" fill="#000"/><rect x="12" y="11" width="1" height="1" fill="#00ffff"/><rect x="13" y="11" width="3" height="1" fill="#000"/><rect x="3" y="12" width="2" height="1" fill="#000"/><rect x="11" y="12" width="2" height="1" fill="#000"/><rect x="5" y="13" width="2" height="1" fill="#000"/><rect x="9" y="13" width="2" height="1" fill="#000"/><rect x="7" y="14" width="2" height="1" fill="#000"/></svg>
<div class="trow b" style="left:41px;top:227px"><span class="fit" style="letter-spacing:0.414px">VBAProject (SUIVI RC BS18-lot1.xlsm)</span></div>
<svg class="abs" style="left:0;top:-51px" width="70" height="360" shape-rendering="crispEdges" fill="#808080"><rect x="15" y="62" width="1" height="1"/><rect x="17" y="62" width="1" height="1"/><rect x="19" y="62" width="1" height="1"/><rect x="15" y="110" width="1" height="1"/><rect x="17" y="110" width="1" height="1"/><rect x="19" y="110" width="1" height="1"/><rect x="15" y="286" width="1" height="1"/><rect x="17" y="286" width="1" height="1"/><rect x="19" y="286" width="1" height="1"/><rect x="9" y="68" width="1" height="1"/><rect x="9" y="70" width="1" height="1"/><rect x="9" y="72" width="1" height="1"/><rect x="9" y="74" width="1" height="1"/><rect x="9" y="76" width="1" height="1"/><rect x="9" y="78" width="1" height="1"/><rect x="9" y="80" width="1" height="1"/><rect x="9" y="82" width="1" height="1"/><rect x="9" y="84" width="1" height="1"/><rect x="9" y="86" width="1" height="1"/><rect x="9" y="88" width="1" height="1"/><rect x="9" y="90" width="1" height="1"/><rect x="9" y="92" width="1" height="1"/><rect x="9" y="94" width="1" height="1"/><rect x="9" y="96" width="1" height="1"/><rect x="9" y="98" width="1" height="1"/><rect x="9" y="100" width="1" height="1"/><rect x="9" y="102" width="1" height="1"/><rect x="9" y="104" width="1" height="1"/><rect x="9" y="116" width="1" height="1"/><rect x="9" y="118" width="1" height="1"/><rect x="9" y="120" width="1" height="1"/><rect x="9" y="122" width="1" height="1"/><rect x="9" y="124" width="1" height="1"/><rect x="9" y="126" width="1" height="1"/><rect x="9" y="128" width="1" height="1"/><rect x="9" y="130" width="1" height="1"/><rect x="9" y="132" width="1" height="1"/><rect x="9" y="134" width="1" height="1"/><rect x="9" y="136" width="1" height="1"/><rect x="9" y="138" width="1" height="1"/><rect x="9" y="140" width="1" height="1"/><rect x="9" y="142" width="1" height="1"/><rect x="9" y="144" width="1" height="1"/><rect x="9" y="146" width="1" height="1"/><rect x="9" y="148" width="1" height="1"/><rect x="9" y="150" width="1" height="1"/><rect x="9" y="152" width="1" height="1"/><rect x="9" y="154" width="1" height="1"/><rect x="9" y="156" width="1" height="1"/><rect x="9" y="158" width="1" height="1"/><rect x="9" y="160" width="1" height="1"/><rect x="9" y="162" width="1" height="1"/><rect x="9" y="164" width="1" height="1"/><rect x="9" y="166" width="1" height="1"/><rect x="9" y="168" width="1" height="1"/><rect x="9" y="170" width="1" height="1"/><rect x="9" y="172" width="1" height="1"/><rect x="9" y="174" width="1" height="1"/><rect x="9" y="176" width="1" height="1"/><rect x="9" y="178" width="1" height="1"/><rect x="9" y="180" width="1" height="1"/><rect x="9" y="182" width="1" height="1"/><rect x="9" y="184" width="1" height="1"/><rect x="9" y="186" width="1" height="1"/><rect x="9" y="188" width="1" height="1"/><rect x="9" y="190" width="1" height="1"/><rect x="9" y="192" width="1" height="1"/><rect x="9" y="194" width="1" height="1"/><rect x="9" y="196" width="1" height="1"/><rect x="9" y="198" width="1" height="1"/><rect x="9" y="200" width="1" height="1"/><rect x="9" y="202" width="1" height="1"/><rect x="9" y="204" width="1" height="1"/><rect x="9" y="206" width="1" height="1"/><rect x="9" y="208" width="1" height="1"/><rect x="9" y="210" width="1" height="1"/><rect x="9" y="212" width="1" height="1"/><rect x="9" y="214" width="1" height="1"/><rect x="9" y="216" width="1" height="1"/><rect x="9" y="218" width="1" height="1"/><rect x="9" y="220" width="1" height="1"/><rect x="9" y="222" width="1" height="1"/><rect x="9" y="224" width="1" height="1"/><rect x="9" y="226" width="1" height="1"/><rect x="9" y="228" width="1" height="1"/><rect x="9" y="230" width="1" height="1"/><rect x="9" y="232" width="1" height="1"/><rect x="9" y="234" width="1" height="1"/><rect x="9" y="236" width="1" height="1"/><rect x="9" y="238" width="1" height="1"/><rect x="9" y="240" width="1" height="1"/><rect x="9" y="242" width="1" height="1"/><rect x="9" y="244" width="1" height="1"/><rect x="9" y="246" width="1" height="1"/><rect x="9" y="248" width="1" height="1"/><rect x="9" y="250" width="1" height="1"/><rect x="9" y="252" width="1" height="1"/><rect x="9" y="254" width="1" height="1"/><rect x="9" y="256" width="1" height="1"/><rect x="9" y="258" width="1" height="1"/><rect x="9" y="260" width="1" height="1"/><rect x="9" y="262" width="1" height="1"/><rect x="9" y="264" width="1" height="1"/><rect x="9" y="266" width="1" height="1"/><rect x="9" y="268" width="1" height="1"/><rect x="9" y="270" width="1" height="1"/><rect x="9" y="272" width="1" height="1"/><rect x="9" y="274" width="1" height="1"/><rect x="9" y="276" width="1" height="1"/><rect x="9" y="278" width="1" height="1"/><rect x="9" y="280" width="1" height="1"/><rect x="34" y="78" width="1" height="1"/><rect x="36" y="78" width="1" height="1"/><rect x="38" y="78" width="1" height="1"/><rect x="34" y="94" width="1" height="1"/><rect x="36" y="94" width="1" height="1"/><rect x="38" y="94" width="1" height="1"/><rect x="34" y="126" width="1" height="1"/><rect x="36" y="126" width="1" height="1"/><rect x="38" y="126" width="1" height="1"/><rect x="34" y="190" width="1" height="1"/><rect x="36" y="190" width="1" height="1"/><rect x="38" y="190" width="1" height="1"/><rect x="34" y="222" width="1" height="1"/><rect x="36" y="222" width="1" height="1"/><rect x="38" y="222" width="1" height="1"/><rect x="34" y="270" width="1" height="1"/><rect x="36" y="270" width="1" height="1"/><rect x="38" y="270" width="1" height="1"/><rect x="28" y="70" width="1" height="1"/><rect x="28" y="72" width="1" height="1"/><rect x="28" y="84" width="1" height="1"/><rect x="28" y="86" width="1" height="1"/><rect x="28" y="88" width="1" height="1"/><rect x="28" y="118" width="1" height="1"/><rect x="28" y="120" width="1" height="1"/><rect x="28" y="132" width="1" height="1"/><rect x="28" y="134" width="1" height="1"/><rect x="28" y="136" width="1" height="1"/><rect x="28" y="138" width="1" height="1"/><rect x="28" y="140" width="1" height="1"/><rect x="28" y="142" width="1" height="1"/><rect x="28" y="144" width="1" height="1"/><rect x="28" y="146" width="1" height="1"/><rect x="28" y="148" width="1" height="1"/><rect x="28" y="150" width="1" height="1"/><rect x="28" y="152" width="1" height="1"/><rect x="28" y="154" width="1" height="1"/><rect x="28" y="156" width="1" height="1"/><rect x="28" y="158" width="1" height="1"/><rect x="28" y="160" width="1" height="1"/><rect x="28" y="162" width="1" height="1"/><rect x="28" y="164" width="1" height="1"/><rect x="28" y="166" width="1" height="1"/><rect x="28" y="168" width="1" height="1"/><rect x="28" y="170" width="1" height="1"/><rect x="28" y="172" width="1" height="1"/><rect x="28" y="174" width="1" height="1"/><rect x="28" y="176" width="1" height="1"/><rect x="28" y="178" width="1" height="1"/><rect x="28" y="180" width="1" height="1"/><rect x="28" y="182" width="1" height="1"/><rect x="28" y="184" width="1" height="1"/><rect x="28" y="196" width="1" height="1"/><rect x="28" y="198" width="1" height="1"/><rect x="28" y="200" width="1" height="1"/><rect x="28" y="202" width="1" height="1"/><rect x="28" y="204" width="1" height="1"/><rect x="28" y="206" width="1" height="1"/><rect x="28" y="208" width="1" height="1"/><rect x="28" y="210" width="1" height="1"/><rect x="28" y="212" width="1" height="1"/><rect x="28" y="214" width="1" height="1"/><rect x="28" y="216" width="1" height="1"/><rect x="28" y="228" width="1" height="1"/><rect x="28" y="230" width="1" height="1"/><rect x="28" y="232" width="1" height="1"/><rect x="28" y="234" width="1" height="1"/><rect x="28" y="236" width="1" height="1"/><rect x="28" y="238" width="1" height="1"/><rect x="28" y="240" width="1" height="1"/><rect x="28" y="242" width="1" height="1"/><rect x="28" y="244" width="1" height="1"/><rect x="28" y="246" width="1" height="1"/><rect x="28" y="248" width="1" height="1"/><rect x="28" y="250" width="1" height="1"/><rect x="28" y="252" width="1" height="1"/><rect x="28" y="254" width="1" height="1"/><rect x="28" y="256" width="1" height="1"/><rect x="28" y="258" width="1" height="1"/><rect x="28" y="260" width="1" height="1"/><rect x="28" y="262" width="1" height="1"/><rect x="28" y="264" width="1" height="1"/><rect x="47" y="142" width="1" height="1"/><rect x="49" y="142" width="1" height="1"/><rect x="51" y="142" width="1" height="1"/><rect x="53" y="142" width="1" height="1"/><rect x="55" y="142" width="1" height="1"/><rect x="57" y="142" width="1" height="1"/><rect x="47" y="158" width="1" height="1"/><rect x="49" y="158" width="1" height="1"/><rect x="51" y="158" width="1" height="1"/><rect x="53" y="158" width="1" height="1"/><rect x="55" y="158" width="1" height="1"/><rect x="57" y="158" width="1" height="1"/><rect x="47" y="174" width="1" height="1"/><rect x="49" y="174" width="1" height="1"/><rect x="51" y="174" width="1" height="1"/><rect x="53" y="174" width="1" height="1"/><rect x="55" y="174" width="1" height="1"/><rect x="57" y="174" width="1" height="1"/><rect x="47" y="206" width="1" height="1"/><rect x="49" y="206" width="1" height="1"/><rect x="51" y="206" width="1" height="1"/><rect x="53" y="206" width="1" height="1"/><rect x="55" y="206" width="1" height="1"/><rect x="57" y="206" width="1" height="1"/><rect x="47" y="238" width="1" height="1"/><rect x="49" y="238" width="1" height="1"/><rect x="51" y="238" width="1" height="1"/><rect x="53" y="238" width="1" height="1"/><rect x="55" y="238" width="1" height="1"/><rect x="57" y="238" width="1" height="1"/><rect x="47" y="254" width="1" height="1"/><rect x="49" y="254" width="1" height="1"/><rect x="51" y="254" width="1" height="1"/><rect x="53" y="254" width="1" height="1"/><rect x="55" y="254" width="1" height="1"/><rect x="57" y="254" width="1" height="1"/><rect x="47" y="134" width="1" height="1"/><rect x="47" y="136" width="1" height="1"/><rect x="47" y="138" width="1" height="1"/><rect x="47" y="140" width="1" height="1"/><rect x="47" y="142" width="1" height="1"/><rect x="47" y="144" width="1" height="1"/><rect x="47" y="146" width="1" height="1"/><rect x="47" y="148" width="1" height="1"/><rect x="47" y="150" width="1" height="1"/><rect x="47" y="152" width="1" height="1"/><rect x="47" y="154" width="1" height="1"/><rect x="47" y="156" width="1" height="1"/><rect x="47" y="158" width="1" height="1"/><rect x="47" y="160" width="1" height="1"/><rect x="47" y="162" width="1" height="1"/><rect x="47" y="164" width="1" height="1"/><rect x="47" y="166" width="1" height="1"/><rect x="47" y="168" width="1" height="1"/><rect x="47" y="170" width="1" height="1"/><rect x="47" y="172" width="1" height="1"/><rect x="47" y="174" width="1" height="1"/><rect x="47" y="198" width="1" height="1"/><rect x="47" y="200" width="1" height="1"/><rect x="47" y="202" width="1" height="1"/><rect x="47" y="204" width="1" height="1"/><rect x="47" y="206" width="1" height="1"/><rect x="47" y="230" width="1" height="1"/><rect x="47" y="232" width="1" height="1"/><rect x="47" y="234" width="1" height="1"/><rect x="47" y="236" width="1" height="1"/><rect x="47" y="238" width="1" height="1"/><rect x="47" y="240" width="1" height="1"/><rect x="47" y="242" width="1" height="1"/><rect x="47" y="244" width="1" height="1"/><rect x="47" y="246" width="1" height="1"/><rect x="47" y="248" width="1" height="1"/><rect x="47" y="250" width="1" height="1"/><rect x="47" y="252" width="1" height="1"/><rect x="47" y="254" width="1" height="1"/></svg>
<div class="l" style="left:0;top:0;width:339px;height:1px;background:#696969"></div>
<div class="l" style="left:0;top:1px;width:339px;height:1px;background:#a0a0a0"></div>
<div class="l" style="left:0;top:2px;width:338px;height:1px;background:#696969"></div>
<div class="l" style="left:0;top:2px;width:1px;height:307px;background:#696969"></div>
<div class="l" style="left:337px;top:2px;width:1px;height:307px;background:#e3e3e3"></div>
<div class="l" style="left:338px;top:1px;width:1px;height:309px;background:#fff"></div>
<div class="l" style="left:1px;top:308px;width:337px;height:1px;background:#e3e3e3"></div>
<div class="l" style="left:0;top:309px;width:339px;height:1px;background:#fff"></div>
</div>

<!-- ===== PROPERTIES PANEL ===== -->
<div class="tbar" style="top:367px"><span id="t2"><span class="fit" style="letter-spacing:-0.134px">Propriétés</span></span></div>
<div class="xbtn" style="top:368px"><svg width="16" height="16" viewBox="0 0 16 16"><path d="M1.7 1.6 L11.5 11.3 M11.5 1.6 L1.7 11.3" stroke="#000" stroke-width="2" fill="none"/></svg></div>
<!-- combo -->
<div class="abs" style="left:0;top:393px;width:336px;height:18px;background:#fcfdfb"></div>
<div class="l" style="left:0;top:393px;width:336px;height:1px;background:#a0a0a0"></div>
<div class="l" style="left:0;top:394px;width:335px;height:1px;background:#696969"></div>
<div class="l" style="left:0;top:394px;width:1px;height:16px;background:#696969"></div>
<div class="cbtn" style="left:318px;top:395px;width:17px;height:15px"></div>
<svg class="abs" style="left:324px;top:402px" width="5" height="3" shape-rendering="crispEdges"><rect x="0" y="0" width="5" height="1"/><rect x="1" y="1" width="3" height="1"/><rect x="2" y="2" width="1" height="1"/></svg>
<!-- tabs -->
<div class="l" style="left:0;top:415px;width:76px;height:1px;background:#fff"></div>
<div class="l" style="left:0;top:415px;width:1px;height:542px;background:#fff"></div>
<div class="l" style="left:76px;top:416px;width:1px;height:19px;background:#a0a0a0"></div>
<div class="l" style="left:77px;top:415px;width:1px;height:20px;background:#696969"></div>
<div class="l" style="left:78px;top:417px;width:72px;height:1px;background:#fff"></div>
<div class="l" style="left:150px;top:418px;width:1px;height:17px;background:#a0a0a0"></div>
<div class="l" style="left:151px;top:417px;width:1px;height:18px;background:#696969"></div>
<div class="l" style="left:78px;top:435px;width:259px;height:1px;background:#fff"></div>
<div class="l" style="left:337px;top:434px;width:1px;height:523px;background:#a0a0a0"></div>
<div class="l" style="left:338px;top:433px;width:1px;height:524px;background:#696969"></div>
<div class="trow" style="left:7px;top:416px"><span class="fit" style="letter-spacing:-0.058px">Alphabétique</span></div>
<div class="trow" style="left:81px;top:418px"><span class="fit" style="letter-spacing:-0.011px">Par catégorie</span></div>
<!-- property list -->
<div class="abs" style="left:3px;top:436px;width:333px;height:530px;background:#fcfdfb;border-top:1px solid #a0a0a0;border-left:1px solid #a0a0a0;border-right:1px solid #fff;box-shadow:inset 1px 1px 0 #696969,inset -1px 0 0 #e3e3e3"></div>

<!-- ===== SPLITTER / CODE FRAME ===== -->
<div class="l" style="left:345px;top:1px;width:1112px;height:1px;background:#a0a0a0"></div>
<div class="l" style="left:346px;top:2px;width:1111px;height:1px;background:#696969"></div>
<div class="l" style="left:345px;top:1px;width:1px;height:956px;background:#a0a0a0"></div>
<div class="l" style="left:346px;top:2px;width:1px;height:955px;background:#696969"></div>
<div class="l" style="left:347px;top:3px;width:1110px;height:1px;background:#fff"></div>
<div class="l" style="left:347px;top:3px;width:1px;height:26px;background:#fff"></div>
<div class="l" style="left:347px;top:29px;width:1110px;height:1px;background:#a0a0a0"></div>
<div class="l" style="left:348px;top:30px;width:1109px;height:1px;background:#696969"></div>
<div class="l" style="left:347px;top:29px;width:1px;height:928px;background:#a0a0a0"></div>
<div class="l" style="left:348px;top:30px;width:1px;height:927px;background:#696969"></div>
<!-- combos -->
<div class="cmb" style="left:357px;top:5px;width:770px;height:22px"><span class="abs" style="left:2.3px;top:3px;line-height:13px"><span class="fit" style="letter-spacing:0.127px">ComboBox1</span></span></div>
<div class="cbtn" style="left:1108px;top:7px;width:17px;height:18px"></div>
<svg class="abs" style="left:1113px;top:14px" width="7" height="4" shape-rendering="crispEdges"><rect x="0" y="0" width="7" height="1"/><rect x="1" y="1" width="5" height="1"/><rect x="2" y="2" width="3" height="1"/><rect x="3" y="3" width="1" height="1"/></svg>
<div class="cmb" style="left:1137px;top:5px;width:340px;height:22px"><span class="abs" style="left:2.3px;top:3px;line-height:13px"><span class="fit" style="letter-spacing:0.411px">Change</span></span></div>
<!-- gutter + code -->
<div id="gutter" class="abs" style="left:349px;top:31px;width:20px;height:915px;background:#f3f2f5"></div>
<div class="abs" style="left:368px;top:31px;width:1px;height:915px;background:#fff"></div><div class="abs" style="left:369px;top:31px;width:1px;height:915px;background:#000"></div>
<svg class="abs" style="left:355px;top:723px" width="13" height="13" viewBox="0 0 13 13"><path d="M1.5 4.5 H6.5 V1.7 L11.3 6.5 L6.5 11.3 V8.5 H1.5 Z" fill="#ffff00" stroke="#000" stroke-width="1"/></svg>
<div id="code">
<div class="ln" style="left:11px;top:20px"><span class="k">Private</span> <span class="k">Sub</span> TextBox11_Change()</div>
<div class="ln" style="left:11px;top:52px"><span class="k">End</span> <span class="k">Sub</span></div>
<div class="ln" style="left:11px;top:84px"><span class="c">'Pour le formulaire</span></div>
<div class="ln" style="left:11px;top:116px"><span class="k">Private</span> <span class="k">Sub</span> UserForm_Initialize()</div>
<div class="ln" style="left:11px;top:148px"><span class="k">Dim</span> J <span class="k">As</span> <span class="k">Long</span></div>
<div class="ln" style="left:11px;top:164px"><span class="k">Dim</span> I <span class="k">As</span> <span class="k">Integer</span></div>
<div class="ln" style="left:19px;top:196px"><span class="k">Set</span> Ws = Sheets("BC") <span class="c">'Correspond au nom de l'onglet dans le fichier Excel</span></div>
<div class="ln" style="left:19px;top:228px"><span class="k">With</span> Me.ComboBox1</div>
<div class="ln" style="left:43px;top:260px"><span class="k">For</span> J = 1 <span class="k">To</span> Ws.Range("H" &amp; Rows.Count).End(xlUp).Row</div>
<div class="ln" style="left:67px;top:276px">.AddItem Ws.Range("H" &amp; J)</div>
<div class="ln" style="left:43px;top:292px"><span class="k">Next</span> J</div>
<div class="ln" style="left:19px;top:324px"><span class="k">End</span> <span class="k">With</span></div>
<div class="ln" style="left:19px;top:356px"><span class="k">For</span> I = 1 <span class="k">To</span> 18</div>
<div class="ln" style="left:51px;top:372px">Me.Controls("TextBox" &amp; I).Visible = <span class="k">True</span></div>
<div class="ln" style="left:19px;top:388px"><span class="k">Next</span> I</div>
<div class="ln" style="left:11px;top:420px"><span class="k">End</span> <span class="k">Sub</span></div>
<div class="ln" style="left:11px;top:452px"><span class="c">'Pour la liste déroulante BC</span></div>
<div class="ln" style="left:11px;top:484px"><span class="k">Private</span> <span class="k">Sub</span> ComboBox1_Change()</div>
<div class="ln" style="left:11px;top:516px"><span class="k">Dim</span> Ligne <span class="k">As</span> <span class="k">Long</span></div>
<div class="ln" style="left:11px;top:532px"><span class="k">Dim</span> I <span class="k">As</span> <span class="k">Integer</span></div>
<div class="ln" style="left:11px;top:564px"><span class="k">If</span> Me.ComboBox1.ListIndex = -1 <span class="k">Then</span> <span class="k">Exit</span> <span class="k">Sub</span></div>
<div class="ln" style="left:27px;top:596px">Ligne = Me.ComboBox1.ListIndex + 1</div>
<div class="ln" style="left:27px;top:628px"><span class="k">With</span> Sheets("BC")</div>
<div class="ln" style="left:43px;top:644px"><span class="k">For</span> I = 1 <span class="k">To</span> 18</div>
<div class="ln" style="left:75px;top:660px">Me.Controls("TextBox" &amp; I) = .Cells(Ligne, I + 115)</div>
<div class="ln" style="left:43px;top:676px"><span class="k">Next</span> I</div>
<div class="abs" style="left:42px;top:690px;width:928px;height:16px;background:#ffff00"></div>
<div class="ln" style="left:43px;top:692px">Me.Label30 = Application.Index(.Range("ED10:ED2000"), Application.Match(Me.ComboBox1.Value, .Range("H10:H2000"), 0))</div>
<div class="ln" style="left:43px;top:708px">Me.Label31 = Application.Index(.Range("EE10:EE2000"), Application.Match(Me.ComboBox1.Value, .Range("H10:H2000"), 0))</div>
<div class="ln" style="left:11px;top:724px"><span class="k">End</span> <span class="k">With</span></div>
<div class="ln" style="left:11px;top:756px"><span class="k">End</span> <span class="k">Sub</span></div>
<div class="ln" style="left:11px;top:788px"><span class="c">'Pour le bouton Nouveau bon de commande</span></div>
<div class="ln" style="left:11px;top:820px"><span class="k">Private</span> <span class="k">Sub</span> CommandButton1_Click()</div>
<div class="ln" style="left:11px;top:852px"><span class="k">Dim</span> L <span class="k">As</span> <span class="k">Integer</span></div>
<div class="ln" style="left:19px;top:884px"><span class="k">If</span> MsgBox("Confirmez-vous l'insertion d'un nouveau BC ?", vbYesNo, "Demande de confirmation d'ajout") = vbYes <span class="k">Then</span></div>
<div class="ln" style="left:51px;top:900px">L = Sheets("BC").Range("h1048576").End(xlUp).Row + 1 <span class="c">'Pour placer le nouvel enregistrement à la première ligne de tableau vide</span></div>
<div class="sep" style="top:65px"></div>
<div class="sep" style="top:433px"></div>
<div class="sep" style="top:769px"></div>
</div>
<!-- bottom bar -->
<div class="abs" style="left:349px;top:946px;width:1108px;height:11px;background:repeating-conic-gradient(#fdfdfd 0 25%,#f1f0f3 0 50%) 0 0/2px 2px"></div>
<div class="abs" style="left:349px;top:946px;width:16px;height:11px;background:#f3f2f5;border-top:1px solid #fff;border-left:1px solid #fff"></div>
<svg class="abs" style="left:352px;top:949px" width="10" height="6" shape-rendering="crispEdges"><rect x="0" y="0" width="10" height="1"/><rect x="3" y="2" width="7" height="1"/><rect x="0" y="4" width="10" height="1"/></svg>
<div class="abs" style="left:365px;top:946px;width:17px;height:11px;background:#f4f4f4;border-top:1px solid #696969;border-left:2px solid #808080"></div>
<svg class="abs" style="left:369px;top:950px" width="10" height="7" shape-rendering="crispEdges"><rect x="0" y="0" width="10" height="1"/><rect x="3" y="2" width="7" height="1"/><rect x="0" y="4" width="10" height="1"/><rect x="3" y="6" width="7" height="1"/></svg>
<div class="abs" style="left:383px;top:946px;width:17px;height:11px;background:#f3f2f5;border-top:1px solid #fff;border-left:1px solid #fff;border-right:2px solid #696969"></div>
<svg class="abs" style="left:388px;top:951px" width="4" height="6" shape-rendering="crispEdges"><rect x="3" y="0" width="1" height="6"/><rect x="2" y="1" width="1" height="5"/><rect x="1" y="2" width="1" height="3"/><rect x="0" y="3" width="1" height="1"/></svg>
<div class="abs" style="left:400px;top:946px;width:274px;height:11px;background:#f3f2f5;border-top:1px solid #e3e3e3;box-shadow:inset 0 1px 0 #fff"></div>
<div class="l" style="left:672px;top:946px;width:1px;height:11px;background:#a0a0a0"></div>
<div class="l" style="left:673px;top:946px;width:1px;height:11px;background:#696969"></div>
</div></body></html>
